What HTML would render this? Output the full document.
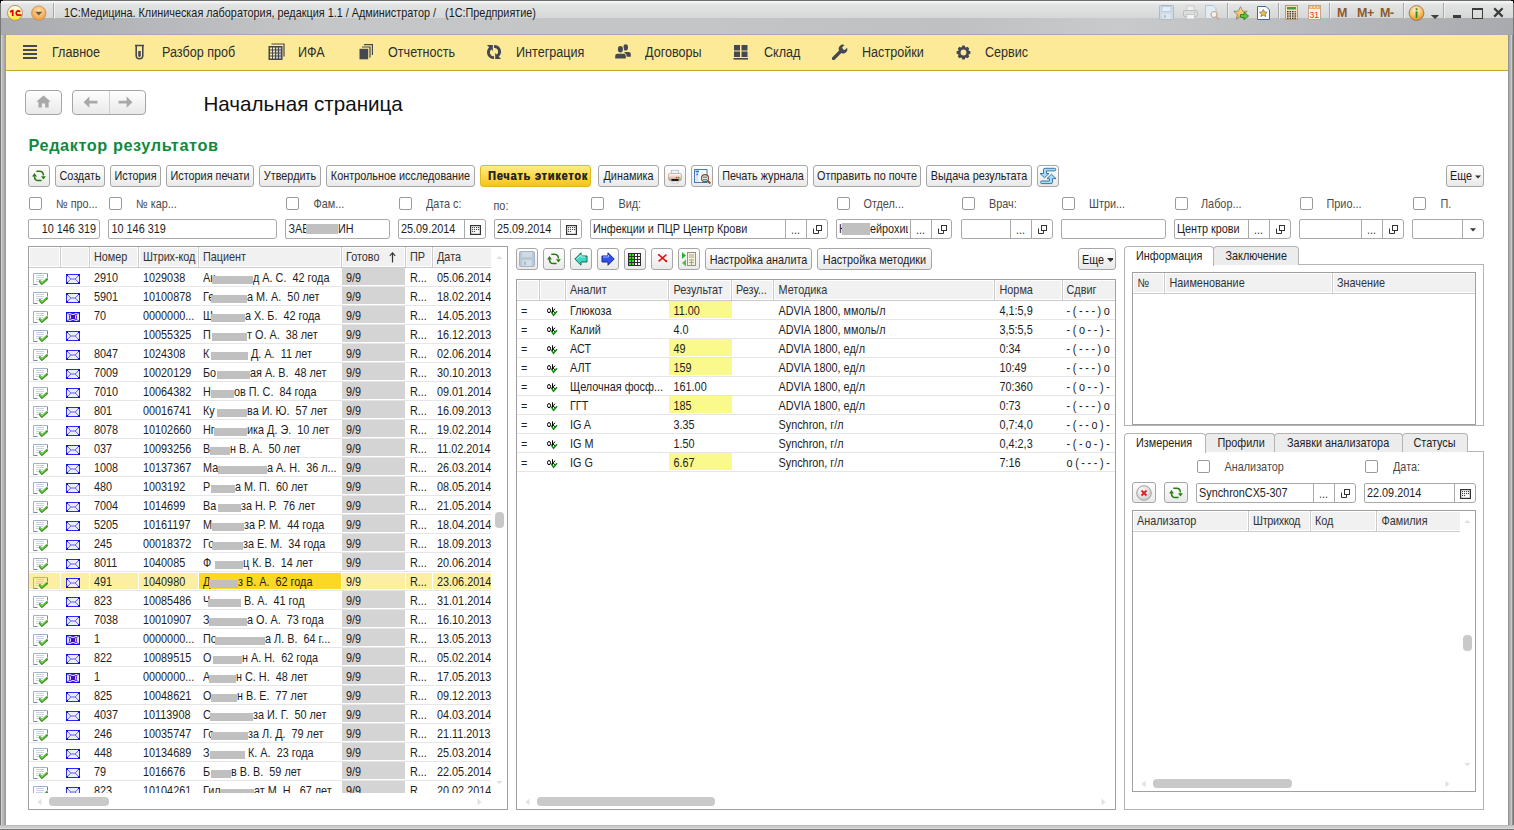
<!DOCTYPE html><html><head><meta charset="utf-8"><style>
*{margin:0;padding:0;box-sizing:border-box}
html,body{width:1514px;height:830px;overflow:hidden;background:#fff}
body{position:relative;font-family:"Liberation Sans",sans-serif;font-size:11px;color:#1e1e1e}
.b{position:absolute}
.t{position:absolute;white-space:pre}
.btn{position:absolute;border:1px solid #a6a6a6;border-radius:3px;background:linear-gradient(#ffffff,#f4f4f4 50%,#e9e9e9);}
.inp{position:absolute;border:1px solid #a9a9a9;border-radius:2px 3px 3px 2px;background:#fff}
.cb{position:absolute;width:13px;height:13px;border:1px solid #9a9a9a;border-radius:2px;background:#fff}
.vl{position:absolute;width:1px;background:#a9a9a9}
</style></head><body><div class="b" style="left:0px;top:0px;width:1514px;height:830px;background:#a7a9ac"></div><div class="b" style="left:0px;top:0px;width:1514px;height:35px;background:linear-gradient(90deg,#a9abae 0px,#b2b4b7 110px,#c5c6c8 320px,#c4c5c6 700px,#bfc0c2 950px,#c9cacb 1120px,#b9babd 1320px,#a8aaad 1514px)"></div><div class="b" style="left:0px;top:0px;width:1514px;height:18px;background:linear-gradient(#6e6e6e 0px,#6e6e6e 1px,#f6f6f6 1px,#f2f2f2 3px,#e3e4e4 4px,#d6d7d7 18px)"></div><div class="b" style="left:0px;top:34px;width:1514px;height:1px;background:#a6a8ac"></div><div class="b" style="left:0px;top:35px;width:6px;height:795px;background:linear-gradient(90deg,#777 0px,#777 1px,#d0d0d0 1px,#d0d0d0 2px,#bebebe 2px,#b8b8b8 3px,#b2b2b2 4px,#aeaeae 4px,#9c9e9e 5px,#9c9e9e 6px)"></div><div class="b" style="left:1508px;top:35px;width:6px;height:795px;background:linear-gradient(90deg,#939394 0px,#939394 1px,#ababad 1px,#ababad 2px,#b5b6b8 2px,#b5b6b8 3px,#c9c9c9 3px,#c9c9c9 4px,#909090 4px,#909090 5px,#777 5px)"></div><div class="b" style="left:0px;top:825px;width:1514px;height:5px;background:linear-gradient(#bbbbbb 0px,#bbbbbb 1px,#cdcdcd 1px,#cacaca 3px,#dcdcdc 3px,#dcdcdc 4px,#777 4px)"></div><div class="b" style="left:0px;top:1px;width:1px;height:34px;background:#777"></div><div class="b" style="left:1513px;top:1px;width:1px;height:34px;background:#777"></div><div class="b" style="left:0px;top:0px;width:3px;height:1px;background:#000"></div><div class="b" style="left:0px;top:0px;width:1px;height:3px;background:#000"></div><div class="b" style="left:1511px;top:0px;width:3px;height:1px;background:#000"></div><div class="b" style="left:1513px;top:0px;width:1px;height:3px;background:#000"></div><div class="b" style="left:6px;top:71px;width:1502px;height:754px;background:#fff"></div><div class="b" style="left:6px;top:35px;width:1502px;height:35px;background:#fcea99"></div><div class="b" style="left:6px;top:70px;width:1502px;height:1px;background:#c6a72a"></div><svg class="b" style="left:5px;top:4px;" width="20" height="18" viewBox="0 0 20 18"><defs><linearGradient id="lg1" x1="0" y1="0" x2="0" y2="1"><stop offset="0" stop-color="#fffbe8"/><stop offset="0.5" stop-color="#fff6a0"/><stop offset="1" stop-color="#ffe418"/></linearGradient></defs><circle cx="10" cy="8.9" r="7.5" fill="url(#lg1)" stroke="#a88a78" stroke-width="0.9"/><path d="M4.6 7.3 L7 5.8 H8.6 V11.9 H6.9 V7.9 L5.2 8.7 Z" fill="#e00000"/><path d="M14.6 7.2 A2.2 2.2 0 1 0 12.2 10.9" fill="none" stroke="#e00000" stroke-width="1.7"/><rect x="11.6" y="10.2" width="4.9" height="1.7" fill="#e00000"/><circle cx="14.6" cy="7.4" r="0.9" fill="#e00000"/></svg><svg class="b" style="left:30px;top:5px;" width="18" height="17" viewBox="0 0 18 17"><defs><radialGradient id="rg1" cx="0.5" cy="0.35" r="0.6"><stop offset="0" stop-color="#ffe2b0"/><stop offset="1" stop-color="#f0a040"/></radialGradient></defs><circle cx="8.8" cy="8.1" r="7.2" fill="url(#rg1)" stroke="#c88a50" stroke-width="0.8"/><path d="M5.3 6.8 L12.3 6.8 L8.8 10.6 Z" fill="#6a5a40"/></svg><div class="b" style="left:53px;top:3px;width:1px;height:16px;background:#a8a8a8;box-shadow:1px 0 0 rgba(255,255,255,0.5)"></div><div class="t" style="left:64px;top:5.64px;font-size:10.85px;line-height:14px;color:#1a1a1a;transform:scaleY(1.1);transform-origin:0 10.76px;">1С:Медицина. Клиническая лаборатория, редакция 1.1 / Администратор /&nbsp;&nbsp; (1С:Предприятие)</div><svg class="b" style="left:1159px;top:5px;" width="15" height="15" viewBox="0 0 15 15"><rect x="0.5" y="0.5" width="14" height="14" rx="1" fill="#cfdbe6" stroke="#a9bccd"/><rect x="3" y="1.5" width="9" height="5" fill="#e6eef5" stroke="#b8c8d6" stroke-width="0.8"/><rect x="3.5" y="9" width="8" height="5" fill="#dfe6ec"/><rect x="5" y="10" width="2" height="3" fill="#b5c4d2"/></svg><svg class="b" style="left:1183px;top:5px;" width="15" height="15" viewBox="0 0 15 15"><rect x="4" y="1" width="7" height="5" fill="#f0f0f0" stroke="#c4c4c4" stroke-width="0.8"/><rect x="0.5" y="5.5" width="14" height="6" rx="1.5" fill="#dcdcdc" stroke="#bdbdbd"/><rect x="3.5" y="9.5" width="8" height="4.5" fill="#f2f2f2" stroke="#c4c4c4" stroke-width="0.8"/><rect x="11" y="7" width="1.5" height="1" fill="#9fd09f"/></svg><svg class="b" style="left:1205px;top:5px;" width="15" height="15" viewBox="0 0 15 15"><path d="M0.5 0.5 H8 L11 3.5 V13.5 H0.5 Z" fill="#e4ecf3" stroke="#b4c4d4" stroke-width="1"/><circle cx="9" cy="9.5" r="3" fill="#eef2f5" stroke="#c8a890" stroke-width="1.2"/><path d="M11 11.5 L14 14.5" stroke="#c8a890" stroke-width="1.6"/></svg><div class="b" style="left:1227px;top:3px;width:1px;height:16px;background:#a8a8a8;box-shadow:1px 0 0 rgba(255,255,255,0.5)"></div><svg class="b" style="left:1233px;top:6px;" width="17" height="15" viewBox="0 0 17 15"><defs><linearGradient id="st1" x1="0" y1="0" x2="0" y2="1"><stop offset="0" stop-color="#ffe9a8"/><stop offset="1" stop-color="#e8a830"/></linearGradient></defs><path d="M7.5 0.7 L9.5 5 L14.2 5.4 L10.6 8.5 L11.7 13.1 L7.5 10.6 L3.3 13.1 L4.4 8.5 L0.8 5.4 L5.5 5 Z" fill="url(#st1)" stroke="#8a7a60" stroke-width="0.8"/><path d="M7.5 8.5 H11 V6.2 L15.6 10 L11 13.8 V11.5 H7.5 Z" fill="#58c040" stroke="#2a7a20" stroke-width="0.8"/></svg><svg class="b" style="left:1257px;top:6px;" width="14" height="14" viewBox="0 0 14 14"><path d="M0.5 0.5 H9 L12.5 4 V13.5 H0.5 Z" fill="#fff" stroke="#3a6aa8" stroke-width="1"/><path d="M6.3 3.5 L7.5 6 L10.2 6.2 L8.1 8 L8.8 10.6 L6.3 9.2 L3.8 10.6 L4.5 8 L2.4 6.2 L5.1 6 Z" fill="#f0c050" stroke="#6a5a40" stroke-width="0.6"/></svg><div class="b" style="left:1278px;top:3px;width:1px;height:16px;background:#a8a8a8;box-shadow:1px 0 0 rgba(255,255,255,0.5)"></div><svg class="b" style="left:1285px;top:5px;" width="13" height="15" viewBox="0 0 13 15"><rect x="0.5" y="0.5" width="12" height="14" fill="#f6e2c0" stroke="#b89a70"/><rect x="2" y="2" width="9" height="2.5" fill="#40a040"/><rect x="2.0" y="6.0" width="1.6" height="1.3" fill="#303030"/><rect x="4.5" y="6.0" width="1.6" height="1.3" fill="#303030"/><rect x="7.0" y="6.0" width="1.6" height="1.3" fill="#303030"/><rect x="9.5" y="6.0" width="1.6" height="1.3" fill="#d03020"/><rect x="2.0" y="8.2" width="1.6" height="1.3" fill="#303030"/><rect x="4.5" y="8.2" width="1.6" height="1.3" fill="#303030"/><rect x="7.0" y="8.2" width="1.6" height="1.3" fill="#303030"/><rect x="9.5" y="8.2" width="1.6" height="1.3" fill="#303030"/><rect x="2.0" y="10.4" width="1.6" height="1.3" fill="#303030"/><rect x="4.5" y="10.4" width="1.6" height="1.3" fill="#303030"/><rect x="7.0" y="10.4" width="1.6" height="1.3" fill="#303030"/><rect x="9.5" y="10.4" width="1.6" height="1.3" fill="#303030"/><rect x="2.0" y="12.600000000000001" width="1.6" height="1.3" fill="#303030"/><rect x="4.5" y="12.600000000000001" width="1.6" height="1.3" fill="#303030"/><rect x="7.0" y="12.600000000000001" width="1.6" height="1.3" fill="#303030"/><rect x="9.5" y="12.600000000000001" width="1.6" height="1.3" fill="#303030"/></svg><svg class="b" style="left:1308px;top:5px;" width="13" height="15" viewBox="0 0 13 15"><rect x="0.5" y="0.5" width="12" height="14" fill="#fbf3e6" stroke="#c0a890"/><rect x="1" y="1" width="11" height="3" fill="#f3b35a"/><rect x="2.5" y="1.5" width="1.2" height="1.2" fill="#fff"/><rect x="5.9" y="1.5" width="1.2" height="1.2" fill="#fff"/><rect x="9.3" y="1.5" width="1.2" height="1.2" fill="#fff"/><text x="1.6" y="13" font-family="Liberation Sans" font-size="8.5" fill="#e03010">31</text></svg><div class="b" style="left:1329px;top:3px;width:1px;height:16px;background:#a8a8a8;box-shadow:1px 0 0 rgba(255,255,255,0.5)"></div><div class="t" style="left:1337px;top:5.47px;font-size:12.5px;line-height:16px;color:#8b5a2b;font-weight:700;">M</div><div class="t" style="left:1357px;top:5.47px;font-size:12.5px;line-height:16px;color:#8b5a2b;font-weight:700;letter-spacing:-0.5px">M+</div><div class="t" style="left:1380px;top:5.47px;font-size:12.5px;line-height:16px;color:#8b5a2b;font-weight:700;letter-spacing:-0.5px">M-</div><div class="b" style="left:1403px;top:3px;width:1px;height:16px;background:#a8a8a8;box-shadow:1px 0 0 rgba(255,255,255,0.5)"></div><svg class="b" style="left:1408px;top:5px;" width="17" height="16" viewBox="0 0 17 16"><defs><radialGradient id="rg2" cx="0.45" cy="0.3" r="0.7"><stop offset="0" stop-color="#fff4d0"/><stop offset="0.6" stop-color="#f8c060"/><stop offset="1" stop-color="#e09020"/></radialGradient></defs><circle cx="8.5" cy="8" r="7.4" fill="url(#rg2)" stroke="#8a7050" stroke-width="0.8"/><rect x="7.6" y="6.3" width="1.9" height="6.5" fill="#2a8a2a"/><rect x="7.6" y="3.3" width="1.9" height="1.9" fill="#2a8a2a"/></svg><svg class="b" style="left:1430px;top:14px;" width="10" height="6" viewBox="0 0 10 6"><path d="M0.8 1 H9.2 L5 5 Z" fill="#404040"/></svg><div class="b" style="left:1443px;top:3px;width:1px;height:16px;background:#a8a8a8;box-shadow:1px 0 0 rgba(255,255,255,0.5)"></div><div class="b" style="left:1453px;top:15px;width:8px;height:3px;background:#3c3c3c"></div><div class="b" style="left:1472px;top:8px;width:11px;height:11px;border:1.5px solid #3c3c3c;border-top-width:2.5px"></div><svg class="b" style="left:1493px;top:7px;" width="11" height="11" viewBox="0 0 11 11"><path d="M1.2 1.2 L9.6 9.6 M9.6 1.2 L1.2 9.6" stroke="#3c3c3c" stroke-width="2.2"/></svg><div class="b" style="left:23px;top:45px;width:14px;height:2px;background:#454850"></div><div class="b" style="left:23px;top:49px;width:14px;height:2px;background:#454850"></div><div class="b" style="left:23px;top:53px;width:14px;height:2px;background:#454850"></div><div class="b" style="left:23px;top:57px;width:14px;height:2px;background:#454850"></div><div class="t" style="left:52px;top:44.63px;font-size:12.6px;line-height:16px;color:#2e2e2e;transform:scaleY(1.1);transform-origin:0 12.37px;">Главное</div><svg class="b" style="left:134px;top:44px;" width="11" height="16" viewBox="0 0 11 16"><path d="M1 1.5 H10 M2.2 1.5 V11.5 A3.3 3.3 0 0 0 8.8 11.5 V1.5" fill="none" stroke="#454850" stroke-width="1.6"/><path d="M4.2 7 H6.8 V12 L5.5 13.2 L4.2 12 Z" fill="#454850"/></svg><div class="t" style="left:162px;top:44.63px;font-size:12.6px;line-height:16px;color:#2e2e2e;transform:scaleY(1.1);transform-origin:0 12.37px;">Разбор проб</div><svg class="b" style="left:268px;top:43px;" width="17" height="17" viewBox="0 0 17 17"><path d="M3.5 1 H16 V13.5" fill="none" stroke="#454850" stroke-width="1.2"/><rect x="0.5" y="3" width="14" height="14" fill="#454850"/><rect x="2" y="4.5" width="2" height="2" fill="#f8f0a0"/><rect x="5" y="4.5" width="2" height="2" fill="#f8f0a0"/><rect x="8" y="4.5" width="2" height="2" fill="#c8c8cc"/><rect x="11" y="4.5" width="2" height="2" fill="#c8c8cc"/><rect x="2" y="7.5" width="2" height="2" fill="#f8f0a0"/><rect x="5" y="7.5" width="2" height="2" fill="#f8f0a0"/><rect x="8" y="7.5" width="2" height="2" fill="#c8c8cc"/><rect x="11" y="7.5" width="2" height="2" fill="#c8c8cc"/><rect x="2" y="10.5" width="2" height="2" fill="#f8f0a0"/><rect x="5" y="10.5" width="2" height="2" fill="#f8f0a0"/><rect x="8" y="10.5" width="2" height="2" fill="#c8c8cc"/><rect x="11" y="10.5" width="2" height="2" fill="#c8c8cc"/><rect x="2" y="13.5" width="2" height="2" fill="#f8f0a0"/><rect x="5" y="13.5" width="2" height="2" fill="#f8f0a0"/><rect x="8" y="13.5" width="2" height="2" fill="#c8c8cc"/><rect x="11" y="13.5" width="2" height="2" fill="#c8c8cc"/></svg><div class="t" style="left:298px;top:44.63px;font-size:12.6px;line-height:16px;color:#2e2e2e;transform:scaleY(1.1);transform-origin:0 12.37px;">ИФА</div><svg class="b" style="left:359px;top:44px;" width="14" height="16" viewBox="0 0 14 16"><path d="M5 0.6 H13.4 V11" fill="none" stroke="#454850" stroke-width="1.2"/><path d="M3 3 H11 V13.4" fill="none" stroke="#454850" stroke-width="1.2"/><rect x="0.5" y="4.8" width="8.7" height="10.5" fill="#454850"/></svg><div class="t" style="left:388px;top:44.63px;font-size:12.6px;line-height:16px;color:#2e2e2e;transform:scaleY(1.1);transform-origin:0 12.37px;">Отчетность</div><svg class="b" style="left:486px;top:44px;" width="16" height="16" viewBox="0 0 16 16"><g id="ra"><path d="M0.9 1.1 L6.8 1.1 L6.8 7 Z" fill="#454850"/><path d="M4.8 3.6 Q1.6 6.5 2.6 10 Q4 13.6 8 13.6" fill="none" stroke="#454850" stroke-width="2.8"/></g><use href="#ra" transform="rotate(180 8 8)"/></svg><div class="t" style="left:516px;top:44.63px;font-size:12.6px;line-height:16px;color:#2e2e2e;transform:scaleY(1.1);transform-origin:0 12.37px;">Интеграция</div><svg class="b" style="left:614px;top:43px;" width="18" height="16" viewBox="0 0 18 16"><ellipse cx="11.7" cy="4.4" rx="2.3" ry="3.1" fill="#454850"/><path d="M10 13.7 V10.2 Q10 9 12 9 H14.5 Q16.8 9 16.8 11 V13.7 Z" fill="#454850"/><ellipse cx="6.4" cy="6.3" rx="2.5" ry="3.2" fill="#454850" stroke="#fcea99" stroke-width="1.6" paint-order="stroke"/><path d="M1.2 15.6 V13 Q1.2 10.8 3.5 10.8 H9.5 Q11.8 10.8 11.8 13 V15.6 Z" fill="#454850" stroke="#fcea99" stroke-width="1.6" paint-order="stroke"/></svg><div class="t" style="left:645px;top:44.63px;font-size:12.6px;line-height:16px;color:#2e2e2e;transform:scaleY(1.1);transform-origin:0 12.37px;">Договоры</div><svg class="b" style="left:733px;top:44px;" width="16" height="16" viewBox="0 0 16 16"><rect x="1" y="1" width="6" height="5.5" fill="#454850"/><rect x="8.5" y="1" width="6" height="5.5" fill="#454850"/><rect x="1" y="7.5" width="6" height="5.5" fill="#454850"/><rect x="8.5" y="7.5" width="6" height="5.5" fill="#454850"/><rect x="0.5" y="14" width="14.5" height="1.6" fill="#454850"/></svg><div class="t" style="left:764px;top:44.63px;font-size:12.6px;line-height:16px;color:#2e2e2e;transform:scaleY(1.1);transform-origin:0 12.37px;">Склад</div><svg class="b" style="left:832px;top:44px;" width="16" height="16" viewBox="0 0 16 16"><path d="M1.5 14.5 L8.5 7.5" stroke="#454850" stroke-width="3.2" stroke-linecap="round"/><path d="M7 6.5 A4.2 4.2 0 0 1 12.5 1 L10.2 3.3 L11 5.2 L12.8 6 L15 3.7 A4.2 4.2 0 0 1 9.5 9.2 Z" fill="#454850"/></svg><div class="t" style="left:862px;top:44.63px;font-size:12.6px;line-height:16px;color:#2e2e2e;transform:scaleY(1.1);transform-origin:0 12.37px;">Настройки</div><svg class="b" style="left:956px;top:45px;" width="15" height="15" viewBox="0 0 15 15"><path d="M14.40 6.32 L14.40 8.68 L12.80 9.31 L12.53 9.96 L13.22 11.54 L11.54 13.22 L9.96 12.53 L9.31 12.80 L8.68 14.40 L6.32 14.40 L5.69 12.80 L5.04 12.53 L3.46 13.22 L1.78 11.54 L2.47 9.96 L2.20 9.31 L0.60 8.68 L0.60 6.32 L2.20 5.69 L2.47 5.04 L1.78 3.46 L3.46 1.78 L5.04 2.47 L5.69 2.20 L6.32 0.60 L8.68 0.60 L9.31 2.20 L9.96 2.47 L11.54 1.78 L13.22 3.46 L12.53 5.04 L12.80 5.69 Z" fill="#454850"/><circle cx="7.5" cy="7.5" r="2.9" fill="#fcea99"/></svg><div class="t" style="left:985px;top:44.63px;font-size:12.6px;line-height:16px;color:#2e2e2e;transform:scaleY(1.1);transform-origin:0 12.37px;">Сервис</div><div class="b" style="left:25px;top:90px;width:37px;height:25px;border:1px solid #a6a6a6;border-radius:4px;background:linear-gradient(#fefefe,#e9e9e9)"></div><svg class="b" style="left:36px;top:95px;" width="15" height="13" viewBox="0 0 15 13"><path d="M7.5 0.5 L14.8 6.8 H12.6 V12.6 H9.2 V8.6 H5.8 V12.6 H2.4 V6.8 H0.2 Z" fill="#a8a8a8"/></svg><div class="b" style="left:72px;top:90px;width:74px;height:25px;border:1px solid #a6a6a6;border-radius:4px;background:linear-gradient(#fefefe,#e9e9e9)"></div><div class="b" style="left:109px;top:91px;width:1px;height:23px;background:#cfcfcf"></div><svg class="b" style="left:83px;top:96px;" width="15" height="13" viewBox="0 0 15 13"><path d="M0.6 6.2 L6.4 0.6 V4.8 H14.4 V7.6 H6.4 V11.8 Z" fill="#a8a8a8"/></svg><svg class="b" style="left:118px;top:96px;" width="15" height="13" viewBox="0 0 15 13"><path d="M14.4 6.2 L8.6 0.6 V4.8 H0.6 V7.6 H8.6 V11.8 Z" fill="#a8a8a8"/></svg><div class="t" style="left:203.5px;top:90.66px;font-size:20.6px;line-height:26px;color:#111;">Начальная страница</div><div class="t" style="left:28.5px;top:135.35px;font-size:16.3px;line-height:20px;color:#128a3c;font-weight:700;letter-spacing:0.58px">Редактор результатов</div><div class="btn" style="left:28px;top:165px;width:22px;height:22px;"></div><svg class="b" style="left:32px;top:169px;" width="14" height="14" viewBox="0 0 14 14"><path d="M4.3 2.2 H7.6 Q11.4 2.2 11.4 6.6" fill="none" stroke="#2a7a12" stroke-width="1.5"/><path d="M9 7.2 H13.9 L11.45 10.6 Z" fill="#2a7a12"/><path d="M9.6 11.6 H6.3 Q2.5 11.6 2.5 7.2" fill="none" stroke="#2a7a12" stroke-width="1.5"/><path d="M0.05 7.4 H4.95 L2.5 4 Z" fill="#2a7a12"/></svg><div class="btn" style="left:55px;top:165px;width:50px;height:22px;"></div><div class="t" style="left:55px;top:169.24px;font-size:10.85px;line-height:14px;color:#1e1e1e;transform:scaleY(1.1);transform-origin:0 10.76px;width:50px;text-align:center;">Создать</div><div class="btn" style="left:110px;top:165px;width:51px;height:22px;"></div><div class="t" style="left:110px;top:169.24px;font-size:10.85px;line-height:14px;color:#1e1e1e;transform:scaleY(1.1);transform-origin:0 10.76px;width:51px;text-align:center;">История</div><div class="btn" style="left:166px;top:165px;width:88px;height:22px;"></div><div class="t" style="left:166px;top:169.24px;font-size:10.85px;line-height:14px;color:#1e1e1e;transform:scaleY(1.1);transform-origin:0 10.76px;width:88px;text-align:center;">История печати</div><div class="btn" style="left:259px;top:165px;width:62px;height:22px;"></div><div class="t" style="left:259px;top:169.24px;font-size:10.85px;line-height:14px;color:#1e1e1e;transform:scaleY(1.1);transform-origin:0 10.76px;width:62px;text-align:center;">Утвердить</div><div class="btn" style="left:326px;top:165px;width:149px;height:22px;"></div><div class="t" style="left:326px;top:169.24px;font-size:10.85px;line-height:14px;color:#1e1e1e;transform:scaleY(1.1);transform-origin:0 10.76px;width:149px;text-align:center;">Контрольное исследование</div><div class="b" style="left:480px;top:165px;width:111px;height:22px;border:1px solid #e5b820;border-radius:3px;background:linear-gradient(#ffeb8a,#fcd94a 50%,#f6c21c)"></div><div class="t" style="left:482.5px;top:169.24px;font-size:10.85px;line-height:14px;color:#262626;transform:scaleY(1.1);transform-origin:0 10.76px;font-weight:700;width:111px;text-align:center;letter-spacing:0.85px;text-shadow:0.35px 0 0 #262626">Печать этикеток</div><div class="btn" style="left:598px;top:165px;width:61px;height:22px;"></div><div class="t" style="left:598px;top:169.24px;font-size:10.85px;line-height:14px;color:#1e1e1e;transform:scaleY(1.1);transform-origin:0 10.76px;width:61px;text-align:center;">Динамика</div><div class="btn" style="left:664px;top:165px;width:22px;height:22px;"></div><svg class="b" style="left:667px;top:169px;" width="16" height="16" viewBox="0 0 16 16"><defs><linearGradient id="pr1" x1="0" y1="0" x2="0" y2="1"><stop offset="0" stop-color="#ffffff"/><stop offset="0.45" stop-color="#e8d8c8"/><stop offset="1" stop-color="#b89474"/></linearGradient></defs><rect x="4.5" y="1.3" width="7" height="5" fill="#eef4f8" stroke="#a8c0d0" stroke-width="0.8"/><rect x="1.5" y="4.5" width="13" height="7" rx="1.6" fill="url(#pr1)" stroke="#c0a894" stroke-width="0.8"/><rect x="4.5" y="10" width="7" height="2.2" fill="#111"/><rect x="5" y="12.2" width="6" height="1.8" fill="#fff" stroke="#bbb" stroke-width="0.6"/><circle cx="9.6" cy="8.6" r="0.8" fill="#f03020"/><circle cx="11.6" cy="8.6" r="0.8" fill="#30b030"/></svg><div class="btn" style="left:691px;top:165px;width:22px;height:22px;"></div><svg class="b" style="left:693px;top:168px;" width="18" height="18" viewBox="0 0 18 18"><rect x="1.5" y="1.5" width="12.5" height="13" fill="#f6f9fc" stroke="#4a7aa8" stroke-width="1"/><rect x="2.5" y="5" width="3" height="9" fill="#d8e6f2"/><rect x="2.5" y="2.6" width="3.6" height="1.8" fill="#3a78c0"/><rect x="3.4" y="5.6" width="1.6" height="1.6" fill="#3a78c0"/><circle cx="12" cy="10.2" r="3.5" fill="#dfeaf6" stroke="#8a5020" stroke-width="1.2"/><rect x="10" y="8.6" width="4" height="1.2" fill="#40a040"/><rect x="10" y="11" width="4" height="1.2" fill="#40a040"/><path d="M14.5 12.7 L17.3 15.5" stroke="#8a5020" stroke-width="1.8"/></svg><div class="btn" style="left:718px;top:165px;width:90px;height:22px;"></div><div class="t" style="left:718px;top:169.24px;font-size:10.85px;line-height:14px;color:#1e1e1e;transform:scaleY(1.1);transform-origin:0 10.76px;width:90px;text-align:center;">Печать журнала</div><div class="btn" style="left:813px;top:165px;width:108px;height:22px;"></div><div class="t" style="left:813px;top:169.24px;font-size:10.85px;line-height:14px;color:#1e1e1e;transform:scaleY(1.1);transform-origin:0 10.76px;width:108px;text-align:center;">Отправить по почте</div><div class="btn" style="left:926px;top:165px;width:106px;height:22px;"></div><div class="t" style="left:926px;top:169.24px;font-size:10.85px;line-height:14px;color:#1e1e1e;transform:scaleY(1.1);transform-origin:0 10.76px;width:106px;text-align:center;">Выдача результата</div><div class="btn" style="left:1037px;top:165px;width:22px;height:22px;"></div><svg class="b" style="left:1039px;top:167px;" width="18" height="18" viewBox="0 0 18 18"><path d="M15.8 1.3 H6 Q4.5 1.3 4.5 2.8 V6.5 H1 L5.5 10.8 L10 6.5 H7.5 V3.9 H15.8 Q16.8 3.9 16.8 2.6 Q16.8 1.3 15.8 1.3 Z" fill="#a9dcf6" stroke="#2d6c98" stroke-width="0.9"/><path d="M2.6 16.6 H12 Q13.5 16.6 13.5 15.1 V11.6 H17 L12.5 7.2 L8 11.6 H10.5 V14 H2.6 Q1.6 14 1.6 15.3 Q1.6 16.6 2.6 16.6 Z" fill="#a9dcf6" stroke="#2d6c98" stroke-width="0.9"/></svg><div class="btn" style="left:1446px;top:165px;width:38px;height:22px;"></div><div class="t" style="left:1450px;top:169.24px;font-size:10.85px;line-height:14px;color:#1e1e1e;transform:scaleY(1.1);transform-origin:0 10.76px;">Еще</div><svg class="b" style="left:1475px;top:175px;" width="6" height="4" viewBox="0 0 6 4"><path d="M0 0.5 H6 L3 3.5 Z" fill="#333"/></svg><div class="cb" style="left:29px;top:197px"></div><div class="t" style="left:56px;top:197.24px;font-size:10.85px;line-height:14px;color:#4a4a4a;transform:scaleY(1.1);transform-origin:0 10.76px;">№ про...</div><div class="cb" style="left:109px;top:197px"></div><div class="t" style="left:136px;top:197.24px;font-size:10.85px;line-height:14px;color:#4a4a4a;transform:scaleY(1.1);transform-origin:0 10.76px;">№ кар...</div><div class="cb" style="left:286px;top:197px"></div><div class="t" style="left:313.5px;top:197.24px;font-size:10.85px;line-height:14px;color:#4a4a4a;transform:scaleY(1.1);transform-origin:0 10.76px;">Фам...</div><div class="cb" style="left:399px;top:197px"></div><div class="t" style="left:426px;top:197.24px;font-size:10.85px;line-height:14px;color:#4a4a4a;transform:scaleY(1.1);transform-origin:0 10.76px;">Дата с:</div><div class="t" style="left:493.5px;top:198.74px;font-size:10.85px;line-height:14px;color:#4a4a4a;transform:scaleY(1.1);transform-origin:0 10.76px;">по:</div><div class="cb" style="left:591px;top:197px"></div><div class="t" style="left:618.5px;top:197.24px;font-size:10.85px;line-height:14px;color:#4a4a4a;transform:scaleY(1.1);transform-origin:0 10.76px;">Вид:</div><div class="cb" style="left:837px;top:197px"></div><div class="t" style="left:863.5px;top:197.24px;font-size:10.85px;line-height:14px;color:#4a4a4a;transform:scaleY(1.1);transform-origin:0 10.76px;">Отдел...</div><div class="cb" style="left:962px;top:197px"></div><div class="t" style="left:989px;top:197.24px;font-size:10.85px;line-height:14px;color:#4a4a4a;transform:scaleY(1.1);transform-origin:0 10.76px;">Врач:</div><div class="cb" style="left:1062px;top:197px"></div><div class="t" style="left:1089px;top:197.24px;font-size:10.85px;line-height:14px;color:#4a4a4a;transform:scaleY(1.1);transform-origin:0 10.76px;">Штри...</div><div class="cb" style="left:1175px;top:197px"></div><div class="t" style="left:1201px;top:197.24px;font-size:10.85px;line-height:14px;color:#4a4a4a;transform:scaleY(1.1);transform-origin:0 10.76px;">Лабор...</div><div class="cb" style="left:1300px;top:197px"></div><div class="t" style="left:1326.5px;top:197.24px;font-size:10.85px;line-height:14px;color:#4a4a4a;transform:scaleY(1.1);transform-origin:0 10.76px;">Прио...</div><div class="cb" style="left:1413px;top:197px"></div><div class="t" style="left:1440.5px;top:197.24px;font-size:10.85px;line-height:14px;color:#4a4a4a;transform:scaleY(1.1);transform-origin:0 10.76px;">П.</div><div class="inp" style="left:28px;top:219px;width:72px;height:20px"></div><div class="t" style="left:28px;top:222.44px;font-size:10.85px;line-height:14px;color:#1e1e1e;transform:scaleY(1.1);transform-origin:0 10.76px;width:68px;text-align:right;">10 146 319</div><div class="inp" style="left:108px;top:219px;width:169px;height:20px"></div><div class="t" style="left:111.5px;top:222.44px;font-size:10.85px;line-height:14px;color:#1e1e1e;transform:scaleY(1.1);transform-origin:0 10.76px;">10 146 319</div><div class="inp" style="left:285px;top:219px;width:105px;height:20px"></div><div class="t" style="left:288.5px;top:222.44px;font-size:10.85px;line-height:14px;color:#1e1e1e;transform:scaleY(1.1);transform-origin:0 10.76px;">ЗАБ</div><div class="b" style="left:306px;top:224px;width:32px;height:10px;background:#c0c0c0"></div><div class="t" style="left:338px;top:222.44px;font-size:10.85px;line-height:14px;color:#1e1e1e;transform:scaleY(1.1);transform-origin:0 10.76px;">ИН</div><div class="inp" style="left:398px;top:219px;width:88px;height:20px"></div><div class="vl" style="left:464px;top:220px;height:18px"></div><div class="t" style="left:401px;top:222.44px;font-size:10.85px;line-height:14px;color:#1e1e1e;transform:scaleY(1.1);transform-origin:0 10.76px;">25.09.2014</div><svg class="b" style="left:470px;top:225px;" width="11" height="10" viewBox="0 0 11 10"><rect x="0.6" y="0.6" width="9.8" height="8.8" fill="#fff" stroke="#333" stroke-width="1.2"/><rect x="2" y="2" width="1.1" height="1.1" fill="#444"/><rect x="4" y="2" width="1.1" height="1.1" fill="#444"/><rect x="6" y="2" width="1.1" height="1.1" fill="#444"/><rect x="8" y="2" width="1.1" height="1.1" fill="#444"/><rect x="2" y="4" width="1.1" height="1.1" fill="#444"/><rect x="4" y="4" width="1.1" height="1.1" fill="#444"/><rect x="6" y="4" width="1.1" height="1.1" fill="#444"/><rect x="8" y="4" width="1.1" height="1.1" fill="#444"/><rect x="2" y="6" width="1.1" height="1.1" fill="#444"/><rect x="4" y="6" width="1.1" height="1.1" fill="#444"/></svg><div class="inp" style="left:494px;top:219px;width:88px;height:20px"></div><div class="vl" style="left:560px;top:220px;height:18px"></div><div class="t" style="left:497px;top:222.44px;font-size:10.85px;line-height:14px;color:#1e1e1e;transform:scaleY(1.1);transform-origin:0 10.76px;">25.09.2014</div><svg class="b" style="left:566px;top:225px;" width="11" height="10" viewBox="0 0 11 10"><rect x="0.6" y="0.6" width="9.8" height="8.8" fill="#fff" stroke="#333" stroke-width="1.2"/><rect x="2" y="2" width="1.1" height="1.1" fill="#444"/><rect x="4" y="2" width="1.1" height="1.1" fill="#444"/><rect x="6" y="2" width="1.1" height="1.1" fill="#444"/><rect x="8" y="2" width="1.1" height="1.1" fill="#444"/><rect x="2" y="4" width="1.1" height="1.1" fill="#444"/><rect x="4" y="4" width="1.1" height="1.1" fill="#444"/><rect x="6" y="4" width="1.1" height="1.1" fill="#444"/><rect x="8" y="4" width="1.1" height="1.1" fill="#444"/><rect x="2" y="6" width="1.1" height="1.1" fill="#444"/><rect x="4" y="6" width="1.1" height="1.1" fill="#444"/></svg><div class="inp" style="left:590px;top:219px;width:238px;height:20px"></div><div class="vl" style="left:785px;top:220px;height:18px"></div><div class="vl" style="left:806px;top:220px;height:18px"></div><div class="t" style="left:593px;top:222.44px;font-size:10.85px;line-height:14px;color:#1e1e1e;transform:scaleY(1.1);transform-origin:0 10.76px;">Инфекции и ПЦР Центр Крови</div><div class="t" style="left:791px;top:223.24px;font-size:10.85px;line-height:14px;color:#333;transform:scaleY(1.1);transform-origin:0 10.76px;">...</div><svg class="b" style="left:813px;top:225px;" width="10" height="10" viewBox="0 0 10 10"><rect x="3.5" y="0.5" width="5" height="5" fill="none" stroke="#333" stroke-width="1"/><path d="M0.5 3.5 V8.5 H5.5 V5.8" fill="none" stroke="#333" stroke-width="1"/></svg><div class="inp" style="left:836px;top:219px;width:116px;height:20px"></div><div class="vl" style="left:910px;top:220px;height:18px"></div><div class="vl" style="left:931px;top:220px;height:18px"></div><div class="t" style="left:839px;top:222.44px;font-size:10.85px;line-height:14px;color:#1e1e1e;transform:scaleY(1.1);transform-origin:0 10.76px;">К</div><div class="b" style="left:842px;top:223px;width:28px;height:12px;background:#c0c0c0"></div><div class="b" style="left:869px;top:220px;width:39px;height:18px;overflow:hidden"><div class="t" style="left:1px;top:2.44px;font-size:10.85px;line-height:14px;color:#1e1e1e;transform:scaleY(1.1);transform-origin:0 10.76px;">ейрохиц</div></div><div class="t" style="left:916px;top:223.24px;font-size:10.85px;line-height:14px;color:#333;transform:scaleY(1.1);transform-origin:0 10.76px;">...</div><svg class="b" style="left:938px;top:225px;" width="10" height="10" viewBox="0 0 10 10"><rect x="3.5" y="0.5" width="5" height="5" fill="none" stroke="#333" stroke-width="1"/><path d="M0.5 3.5 V8.5 H5.5 V5.8" fill="none" stroke="#333" stroke-width="1"/></svg><div class="inp" style="left:961px;top:219px;width:92px;height:20px"></div><div class="vl" style="left:1010px;top:220px;height:18px"></div><div class="vl" style="left:1031px;top:220px;height:18px"></div><div class="t" style="left:1016px;top:223.24px;font-size:10.85px;line-height:14px;color:#333;transform:scaleY(1.1);transform-origin:0 10.76px;">...</div><svg class="b" style="left:1038px;top:225px;" width="10" height="10" viewBox="0 0 10 10"><rect x="3.5" y="0.5" width="5" height="5" fill="none" stroke="#333" stroke-width="1"/><path d="M0.5 3.5 V8.5 H5.5 V5.8" fill="none" stroke="#333" stroke-width="1"/></svg><div class="inp" style="left:1061px;top:219px;width:105px;height:20px"></div><div class="inp" style="left:1174px;top:219px;width:117px;height:20px"></div><div class="vl" style="left:1248px;top:220px;height:18px"></div><div class="vl" style="left:1269px;top:220px;height:18px"></div><div class="t" style="left:1177px;top:222.44px;font-size:10.85px;line-height:14px;color:#1e1e1e;transform:scaleY(1.1);transform-origin:0 10.76px;">Центр крови</div><div class="t" style="left:1254px;top:223.24px;font-size:10.85px;line-height:14px;color:#333;transform:scaleY(1.1);transform-origin:0 10.76px;">...</div><svg class="b" style="left:1276px;top:225px;" width="10" height="10" viewBox="0 0 10 10"><rect x="3.5" y="0.5" width="5" height="5" fill="none" stroke="#333" stroke-width="1"/><path d="M0.5 3.5 V8.5 H5.5 V5.8" fill="none" stroke="#333" stroke-width="1"/></svg><div class="inp" style="left:1299px;top:219px;width:105px;height:20px"></div><div class="vl" style="left:1361px;top:220px;height:18px"></div><div class="vl" style="left:1382px;top:220px;height:18px"></div><div class="t" style="left:1367px;top:223.24px;font-size:10.85px;line-height:14px;color:#333;transform:scaleY(1.1);transform-origin:0 10.76px;">...</div><svg class="b" style="left:1389px;top:225px;" width="10" height="10" viewBox="0 0 10 10"><rect x="3.5" y="0.5" width="5" height="5" fill="none" stroke="#333" stroke-width="1"/><path d="M0.5 3.5 V8.5 H5.5 V5.8" fill="none" stroke="#333" stroke-width="1"/></svg><div class="inp" style="left:1412px;top:219px;width:72px;height:20px"></div><div class="vl" style="left:1462px;top:220px;height:18px"></div><svg class="b" style="left:1470px;top:228px;" width="6" height="4" viewBox="0 0 6 4"><path d="M0 0.3 H6 L3 3.5 Z" fill="#333"/></svg><div class="b" style="left:28px;top:246px;width:480px;height:564px;border:1px solid #a0a0a0;background:#fff"></div><div class="b" style="left:30px;top:248px;width:29px;height:18px;background:#f1f1f1"></div><div class="b" style="left:60px;top:247px;width:1px;height:20px;background:#cacaca"></div><div class="b" style="left:62px;top:248px;width:26px;height:18px;background:#f1f1f1"></div><div class="b" style="left:89px;top:247px;width:1px;height:20px;background:#cacaca"></div><div class="b" style="left:91px;top:248px;width:46px;height:18px;background:#f1f1f1"></div><div class="b" style="left:138px;top:247px;width:1px;height:20px;background:#cacaca"></div><div class="b" style="left:140px;top:248px;width:57px;height:18px;background:#f1f1f1"></div><div class="b" style="left:198px;top:247px;width:1px;height:20px;background:#cacaca"></div><div class="b" style="left:200px;top:248px;width:140px;height:18px;background:#f1f1f1"></div><div class="b" style="left:341px;top:247px;width:1px;height:20px;background:#cacaca"></div><div class="b" style="left:343px;top:248px;width:61px;height:18px;background:#f1f1f1"></div><div class="b" style="left:405px;top:247px;width:1px;height:20px;background:#cacaca"></div><div class="b" style="left:407px;top:248px;width:24px;height:18px;background:#f1f1f1"></div><div class="b" style="left:432px;top:247px;width:1px;height:20px;background:#cacaca"></div><div class="b" style="left:434px;top:248px;width:57px;height:18px;background:#f1f1f1"></div><div class="b" style="left:29px;top:267px;width:462px;height:1px;background:#cacaca"></div><div class="t" style="left:94px;top:250.24px;font-size:10.85px;line-height:14px;color:#333;transform:scaleY(1.1);transform-origin:0 10.76px;">Номер</div><div class="t" style="left:143px;top:250.24px;font-size:10.85px;line-height:14px;color:#333;transform:scaleY(1.1);transform-origin:0 10.76px;letter-spacing:-0.1px">Штрих-код</div><div class="t" style="left:203px;top:250.24px;font-size:10.85px;line-height:14px;color:#333;transform:scaleY(1.1);transform-origin:0 10.76px;">Пациент</div><div class="t" style="left:346px;top:250.24px;font-size:10.85px;line-height:14px;color:#333;transform:scaleY(1.1);transform-origin:0 10.76px;">Готово</div><svg class="b" style="left:389px;top:252px;" width="7" height="11" viewBox="0 0 7 11"><path d="M3.5 1 V10.5" stroke="#333" stroke-width="1.2"/><path d="M0.8 3.8 L3.5 0.8 L6.2 3.8" fill="none" stroke="#333" stroke-width="1.1"/></svg><div class="t" style="left:410px;top:250.24px;font-size:10.85px;line-height:14px;color:#333;transform:scaleY(1.1);transform-origin:0 10.76px;">ПР</div><div class="t" style="left:437px;top:250.24px;font-size:10.85px;line-height:14px;color:#333;transform:scaleY(1.1);transform-origin:0 10.76px;">Дата</div><svg class="b" style="left:496px;top:255px;" width="7" height="5" viewBox="0 0 7 5"><path d="M0.5 4 L3.5 0.8 L6.5 4 Z" fill="#e0e0e0"/></svg><div class="b" style="left:29px;top:268px;width:462px;height:525px;overflow:hidden"><div class="b" style="left:0px;top:18px;width:462px;height:1px;background:#e6e6e6"></div><div class="b" style="left:313px;top:0px;width:63px;height:17px;background:#d4d4d4"></div><svg class="b" style="left:4px;top:5px;" width="15" height="12" viewBox="0 0 15 12"><path d="M0.5 11.5 V0.5 H14.5 V4.5" fill="none" stroke="#9fb4c8" stroke-width="1"/><path d="M0.5 11.5 H4.5" stroke="#708aa2" stroke-width="1"/><path d="M14.5 1 V4.5" stroke="#708aa2" stroke-width="1"/><path d="M3 2.5 H11 M3 4.5 H11 M3 6.5 H10 M3 8.5 H5" stroke="#b9c9d8" stroke-width="0.8"/><path d="M6.9 8.3 L8.9 10.7 L13.8 6.3" fill="none" stroke="#3a9a20" stroke-width="2.4" stroke-linejoin="round" stroke-linecap="round"/><path d="M7.2 8.2 L8.9 10.1 L13.4 6.1" fill="none" stroke="#86dc5c" stroke-width="0.9"/></svg><svg class="b" style="left:37px;top:6px;" width="14" height="10" viewBox="0 0 14 10"><rect x="0.5" y="0.5" width="13" height="9" fill="#ececfd" stroke="#2a2af6" stroke-width="1"/><path d="M0.8 0.8 L4.8 5 H9.2 L13.2 0.8 M0.8 9.2 L4.8 5 M9.2 5 L13.2 9.2" fill="none" stroke="#4a4af6" stroke-width="0.85"/><rect x="0" y="0" width="2" height="2" fill="#1010e0"/><rect x="12" y="0" width="2" height="2" fill="#1010e0"/><rect x="0" y="8" width="2" height="2" fill="#1010e0"/><rect x="12" y="8" width="2" height="2" fill="#1010e0"/></svg><div class="t" style="left:65px;top:2.84px;font-size:10.85px;line-height:14px;color:#1e1e1e;transform:scaleY(1.1);transform-origin:0 10.76px;">2910</div><div class="t" style="left:114px;top:2.84px;font-size:10.85px;line-height:14px;color:#1e1e1e;transform:scaleY(1.1);transform-origin:0 10.76px;">1029038</div><div class="t" style="left:174px;top:2.84px;font-size:10.85px;line-height:14px;color:#1e1e1e;transform:scaleY(1.1);transform-origin:0 10.76px;">Ак</div><div class="b" style="left:183px;top:8px;width:41px;height:8px;background:#c0c0c0"></div><div class="t" style="left:224px;top:2.84px;font-size:10.85px;line-height:14px;color:#1e1e1e;transform:scaleY(1.1);transform-origin:0 10.76px;">д А. С.  42 года</div><div class="t" style="left:317px;top:2.84px;font-size:10.85px;line-height:14px;color:#1e1e1e;transform:scaleY(1.1);transform-origin:0 10.76px;">9/9</div><div class="t" style="left:381px;top:2.84px;font-size:10.85px;line-height:14px;color:#1e1e1e;transform:scaleY(1.1);transform-origin:0 10.76px;">R...</div><div class="t" style="left:408px;top:2.84px;font-size:10.85px;line-height:14px;color:#1e1e1e;transform:scaleY(1.1);transform-origin:0 10.76px;">05.06.2014</div><div class="b" style="left:0px;top:37px;width:462px;height:1px;background:#e6e6e6"></div><div class="b" style="left:313px;top:19px;width:63px;height:17px;background:#d4d4d4"></div><svg class="b" style="left:4px;top:24px;" width="15" height="12" viewBox="0 0 15 12"><path d="M0.5 11.5 V0.5 H14.5 V4.5" fill="none" stroke="#9fb4c8" stroke-width="1"/><path d="M0.5 11.5 H4.5" stroke="#708aa2" stroke-width="1"/><path d="M14.5 1 V4.5" stroke="#708aa2" stroke-width="1"/><path d="M3 2.5 H11 M3 4.5 H11 M3 6.5 H10 M3 8.5 H5" stroke="#b9c9d8" stroke-width="0.8"/><path d="M6.9 8.3 L8.9 10.7 L13.8 6.3" fill="none" stroke="#3a9a20" stroke-width="2.4" stroke-linejoin="round" stroke-linecap="round"/><path d="M7.2 8.2 L8.9 10.1 L13.4 6.1" fill="none" stroke="#86dc5c" stroke-width="0.9"/></svg><svg class="b" style="left:37px;top:25px;" width="14" height="10" viewBox="0 0 14 10"><rect x="0.5" y="0.5" width="13" height="9" fill="#ececfd" stroke="#2a2af6" stroke-width="1"/><path d="M0.8 0.8 L4.8 5 H9.2 L13.2 0.8 M0.8 9.2 L4.8 5 M9.2 5 L13.2 9.2" fill="none" stroke="#4a4af6" stroke-width="0.85"/><rect x="0" y="0" width="2" height="2" fill="#1010e0"/><rect x="12" y="0" width="2" height="2" fill="#1010e0"/><rect x="0" y="8" width="2" height="2" fill="#1010e0"/><rect x="12" y="8" width="2" height="2" fill="#1010e0"/></svg><div class="t" style="left:65px;top:21.84px;font-size:10.85px;line-height:14px;color:#1e1e1e;transform:scaleY(1.1);transform-origin:0 10.76px;">5901</div><div class="t" style="left:114px;top:21.84px;font-size:10.85px;line-height:14px;color:#1e1e1e;transform:scaleY(1.1);transform-origin:0 10.76px;">10100878</div><div class="t" style="left:174px;top:21.84px;font-size:10.85px;line-height:14px;color:#1e1e1e;transform:scaleY(1.1);transform-origin:0 10.76px;">Ге</div><div class="b" style="left:182px;top:27px;width:36px;height:8px;background:#c0c0c0"></div><div class="t" style="left:218px;top:21.84px;font-size:10.85px;line-height:14px;color:#1e1e1e;transform:scaleY(1.1);transform-origin:0 10.76px;">а М. А.  50 лет</div><div class="t" style="left:317px;top:21.84px;font-size:10.85px;line-height:14px;color:#1e1e1e;transform:scaleY(1.1);transform-origin:0 10.76px;">9/9</div><div class="t" style="left:381px;top:21.84px;font-size:10.85px;line-height:14px;color:#1e1e1e;transform:scaleY(1.1);transform-origin:0 10.76px;">R...</div><div class="t" style="left:408px;top:21.84px;font-size:10.85px;line-height:14px;color:#1e1e1e;transform:scaleY(1.1);transform-origin:0 10.76px;">18.02.2014</div><div class="b" style="left:0px;top:56px;width:462px;height:1px;background:#e6e6e6"></div><div class="b" style="left:313px;top:38px;width:63px;height:17px;background:#d4d4d4"></div><svg class="b" style="left:4px;top:43px;" width="15" height="12" viewBox="0 0 15 12"><path d="M0.5 11.5 V0.5 H14.5 V4.5" fill="none" stroke="#9fb4c8" stroke-width="1"/><path d="M0.5 11.5 H4.5" stroke="#708aa2" stroke-width="1"/><path d="M14.5 1 V4.5" stroke="#708aa2" stroke-width="1"/><path d="M3 2.5 H11 M3 4.5 H11 M3 6.5 H10 M3 8.5 H5" stroke="#b9c9d8" stroke-width="0.8"/><path d="M6.9 8.3 L8.9 10.7 L13.8 6.3" fill="none" stroke="#3a9a20" stroke-width="2.4" stroke-linejoin="round" stroke-linecap="round"/><path d="M7.2 8.2 L8.9 10.1 L13.4 6.1" fill="none" stroke="#86dc5c" stroke-width="0.9"/></svg><svg class="b" style="left:37px;top:44px;" width="14" height="10" viewBox="0 0 14 10"><rect x="0.5" y="0.5" width="13" height="9" fill="#e8e8fb" stroke="#1010f0" stroke-width="1"/><path d="M0.5 0.5 L13.5 9.5 M13.5 0.5 L0.5 9.5" stroke="#1010f0" stroke-width="0.8"/><circle cx="7" cy="5" r="3.6" fill="#e8e8fb" stroke="#6010e0" stroke-width="1"/><rect x="5" y="3" width="4" height="4" fill="#4010c0"/></svg><div class="t" style="left:65px;top:40.84px;font-size:10.85px;line-height:14px;color:#1e1e1e;transform:scaleY(1.1);transform-origin:0 10.76px;">70</div><div class="t" style="left:114px;top:40.84px;font-size:10.85px;line-height:14px;color:#1e1e1e;transform:scaleY(1.1);transform-origin:0 10.76px;">0000000...</div><div class="t" style="left:174px;top:40.84px;font-size:10.85px;line-height:14px;color:#1e1e1e;transform:scaleY(1.1);transform-origin:0 10.76px;">Ш</div><div class="b" style="left:182px;top:46px;width:34px;height:8px;background:#c0c0c0"></div><div class="t" style="left:216px;top:40.84px;font-size:10.85px;line-height:14px;color:#1e1e1e;transform:scaleY(1.1);transform-origin:0 10.76px;">а Х. Б.  42 года</div><div class="t" style="left:317px;top:40.84px;font-size:10.85px;line-height:14px;color:#1e1e1e;transform:scaleY(1.1);transform-origin:0 10.76px;">9/9</div><div class="t" style="left:381px;top:40.84px;font-size:10.85px;line-height:14px;color:#1e1e1e;transform:scaleY(1.1);transform-origin:0 10.76px;">R...</div><div class="t" style="left:408px;top:40.84px;font-size:10.85px;line-height:14px;color:#1e1e1e;transform:scaleY(1.1);transform-origin:0 10.76px;">14.05.2013</div><div class="b" style="left:0px;top:75px;width:462px;height:1px;background:#e6e6e6"></div><div class="b" style="left:313px;top:57px;width:63px;height:17px;background:#d4d4d4"></div><svg class="b" style="left:4px;top:62px;" width="15" height="12" viewBox="0 0 15 12"><path d="M0.5 11.5 V0.5 H14.5 V4.5" fill="none" stroke="#9fb4c8" stroke-width="1"/><path d="M0.5 11.5 H4.5" stroke="#708aa2" stroke-width="1"/><path d="M14.5 1 V4.5" stroke="#708aa2" stroke-width="1"/><path d="M3 2.5 H11 M3 4.5 H11 M3 6.5 H10 M3 8.5 H5" stroke="#b9c9d8" stroke-width="0.8"/><path d="M6.9 8.3 L8.9 10.7 L13.8 6.3" fill="none" stroke="#3a9a20" stroke-width="2.4" stroke-linejoin="round" stroke-linecap="round"/><path d="M7.2 8.2 L8.9 10.1 L13.4 6.1" fill="none" stroke="#86dc5c" stroke-width="0.9"/></svg><svg class="b" style="left:37px;top:63px;" width="14" height="10" viewBox="0 0 14 10"><rect x="0.5" y="0.5" width="13" height="9" fill="#ececfd" stroke="#2a2af6" stroke-width="1"/><path d="M0.8 0.8 L4.8 5 H9.2 L13.2 0.8 M0.8 9.2 L4.8 5 M9.2 5 L13.2 9.2" fill="none" stroke="#4a4af6" stroke-width="0.85"/><rect x="0" y="0" width="2" height="2" fill="#1010e0"/><rect x="12" y="0" width="2" height="2" fill="#1010e0"/><rect x="0" y="8" width="2" height="2" fill="#1010e0"/><rect x="12" y="8" width="2" height="2" fill="#1010e0"/></svg><div class="t" style="left:65px;top:59.84px;font-size:10.85px;line-height:14px;color:#1e1e1e;transform:scaleY(1.1);transform-origin:0 10.76px;"></div><div class="t" style="left:114px;top:59.84px;font-size:10.85px;line-height:14px;color:#1e1e1e;transform:scaleY(1.1);transform-origin:0 10.76px;">10055325</div><div class="t" style="left:174px;top:59.84px;font-size:10.85px;line-height:14px;color:#1e1e1e;transform:scaleY(1.1);transform-origin:0 10.76px;">П</div><div class="b" style="left:183px;top:65px;width:35px;height:8px;background:#c0c0c0"></div><div class="t" style="left:218px;top:59.84px;font-size:10.85px;line-height:14px;color:#1e1e1e;transform:scaleY(1.1);transform-origin:0 10.76px;">т О. А.  38 лет</div><div class="t" style="left:317px;top:59.84px;font-size:10.85px;line-height:14px;color:#1e1e1e;transform:scaleY(1.1);transform-origin:0 10.76px;">9/9</div><div class="t" style="left:381px;top:59.84px;font-size:10.85px;line-height:14px;color:#1e1e1e;transform:scaleY(1.1);transform-origin:0 10.76px;">R...</div><div class="t" style="left:408px;top:59.84px;font-size:10.85px;line-height:14px;color:#1e1e1e;transform:scaleY(1.1);transform-origin:0 10.76px;">16.12.2013</div><div class="b" style="left:0px;top:94px;width:462px;height:1px;background:#e6e6e6"></div><div class="b" style="left:313px;top:76px;width:63px;height:17px;background:#d4d4d4"></div><svg class="b" style="left:4px;top:81px;" width="15" height="12" viewBox="0 0 15 12"><path d="M0.5 11.5 V0.5 H14.5 V4.5" fill="none" stroke="#9fb4c8" stroke-width="1"/><path d="M0.5 11.5 H4.5" stroke="#708aa2" stroke-width="1"/><path d="M14.5 1 V4.5" stroke="#708aa2" stroke-width="1"/><path d="M3 2.5 H11 M3 4.5 H11 M3 6.5 H10 M3 8.5 H5" stroke="#b9c9d8" stroke-width="0.8"/><path d="M6.9 8.3 L8.9 10.7 L13.8 6.3" fill="none" stroke="#3a9a20" stroke-width="2.4" stroke-linejoin="round" stroke-linecap="round"/><path d="M7.2 8.2 L8.9 10.1 L13.4 6.1" fill="none" stroke="#86dc5c" stroke-width="0.9"/></svg><svg class="b" style="left:37px;top:82px;" width="14" height="10" viewBox="0 0 14 10"><rect x="0.5" y="0.5" width="13" height="9" fill="#ececfd" stroke="#2a2af6" stroke-width="1"/><path d="M0.8 0.8 L4.8 5 H9.2 L13.2 0.8 M0.8 9.2 L4.8 5 M9.2 5 L13.2 9.2" fill="none" stroke="#4a4af6" stroke-width="0.85"/><rect x="0" y="0" width="2" height="2" fill="#1010e0"/><rect x="12" y="0" width="2" height="2" fill="#1010e0"/><rect x="0" y="8" width="2" height="2" fill="#1010e0"/><rect x="12" y="8" width="2" height="2" fill="#1010e0"/></svg><div class="t" style="left:65px;top:78.84px;font-size:10.85px;line-height:14px;color:#1e1e1e;transform:scaleY(1.1);transform-origin:0 10.76px;">8047</div><div class="t" style="left:114px;top:78.84px;font-size:10.85px;line-height:14px;color:#1e1e1e;transform:scaleY(1.1);transform-origin:0 10.76px;">1024308</div><div class="t" style="left:174px;top:78.84px;font-size:10.85px;line-height:14px;color:#1e1e1e;transform:scaleY(1.1);transform-origin:0 10.76px;">К</div><div class="b" style="left:182px;top:84px;width:37px;height:8px;background:#c0c0c0"></div><div class="t" style="left:219px;top:78.84px;font-size:10.85px;line-height:14px;color:#1e1e1e;transform:scaleY(1.1);transform-origin:0 10.76px;"> Д. А.  11 лет</div><div class="t" style="left:317px;top:78.84px;font-size:10.85px;line-height:14px;color:#1e1e1e;transform:scaleY(1.1);transform-origin:0 10.76px;">9/9</div><div class="t" style="left:381px;top:78.84px;font-size:10.85px;line-height:14px;color:#1e1e1e;transform:scaleY(1.1);transform-origin:0 10.76px;">R...</div><div class="t" style="left:408px;top:78.84px;font-size:10.85px;line-height:14px;color:#1e1e1e;transform:scaleY(1.1);transform-origin:0 10.76px;">02.06.2014</div><div class="b" style="left:0px;top:113px;width:462px;height:1px;background:#e6e6e6"></div><div class="b" style="left:313px;top:95px;width:63px;height:17px;background:#d4d4d4"></div><svg class="b" style="left:4px;top:100px;" width="15" height="12" viewBox="0 0 15 12"><path d="M0.5 11.5 V0.5 H14.5 V4.5" fill="none" stroke="#9fb4c8" stroke-width="1"/><path d="M0.5 11.5 H4.5" stroke="#708aa2" stroke-width="1"/><path d="M14.5 1 V4.5" stroke="#708aa2" stroke-width="1"/><path d="M3 2.5 H11 M3 4.5 H11 M3 6.5 H10 M3 8.5 H5" stroke="#b9c9d8" stroke-width="0.8"/><path d="M6.9 8.3 L8.9 10.7 L13.8 6.3" fill="none" stroke="#3a9a20" stroke-width="2.4" stroke-linejoin="round" stroke-linecap="round"/><path d="M7.2 8.2 L8.9 10.1 L13.4 6.1" fill="none" stroke="#86dc5c" stroke-width="0.9"/></svg><svg class="b" style="left:37px;top:101px;" width="14" height="10" viewBox="0 0 14 10"><rect x="0.5" y="0.5" width="13" height="9" fill="#ececfd" stroke="#2a2af6" stroke-width="1"/><path d="M0.8 0.8 L4.8 5 H9.2 L13.2 0.8 M0.8 9.2 L4.8 5 M9.2 5 L13.2 9.2" fill="none" stroke="#4a4af6" stroke-width="0.85"/><rect x="0" y="0" width="2" height="2" fill="#1010e0"/><rect x="12" y="0" width="2" height="2" fill="#1010e0"/><rect x="0" y="8" width="2" height="2" fill="#1010e0"/><rect x="12" y="8" width="2" height="2" fill="#1010e0"/></svg><div class="t" style="left:65px;top:97.84px;font-size:10.85px;line-height:14px;color:#1e1e1e;transform:scaleY(1.1);transform-origin:0 10.76px;">7009</div><div class="t" style="left:114px;top:97.84px;font-size:10.85px;line-height:14px;color:#1e1e1e;transform:scaleY(1.1);transform-origin:0 10.76px;">10020129</div><div class="t" style="left:174px;top:97.84px;font-size:10.85px;line-height:14px;color:#1e1e1e;transform:scaleY(1.1);transform-origin:0 10.76px;">Бо</div><div class="b" style="left:188px;top:103px;width:33px;height:8px;background:#c0c0c0"></div><div class="t" style="left:221px;top:97.84px;font-size:10.85px;line-height:14px;color:#1e1e1e;transform:scaleY(1.1);transform-origin:0 10.76px;">ая А. В.  48 лет</div><div class="t" style="left:317px;top:97.84px;font-size:10.85px;line-height:14px;color:#1e1e1e;transform:scaleY(1.1);transform-origin:0 10.76px;">9/9</div><div class="t" style="left:381px;top:97.84px;font-size:10.85px;line-height:14px;color:#1e1e1e;transform:scaleY(1.1);transform-origin:0 10.76px;">R...</div><div class="t" style="left:408px;top:97.84px;font-size:10.85px;line-height:14px;color:#1e1e1e;transform:scaleY(1.1);transform-origin:0 10.76px;">30.10.2013</div><div class="b" style="left:0px;top:132px;width:462px;height:1px;background:#e6e6e6"></div><div class="b" style="left:313px;top:114px;width:63px;height:17px;background:#d4d4d4"></div><svg class="b" style="left:4px;top:119px;" width="15" height="12" viewBox="0 0 15 12"><path d="M0.5 11.5 V0.5 H14.5 V4.5" fill="none" stroke="#9fb4c8" stroke-width="1"/><path d="M0.5 11.5 H4.5" stroke="#708aa2" stroke-width="1"/><path d="M14.5 1 V4.5" stroke="#708aa2" stroke-width="1"/><path d="M3 2.5 H11 M3 4.5 H11 M3 6.5 H10 M3 8.5 H5" stroke="#b9c9d8" stroke-width="0.8"/><path d="M6.9 8.3 L8.9 10.7 L13.8 6.3" fill="none" stroke="#3a9a20" stroke-width="2.4" stroke-linejoin="round" stroke-linecap="round"/><path d="M7.2 8.2 L8.9 10.1 L13.4 6.1" fill="none" stroke="#86dc5c" stroke-width="0.9"/></svg><svg class="b" style="left:37px;top:120px;" width="14" height="10" viewBox="0 0 14 10"><rect x="0.5" y="0.5" width="13" height="9" fill="#ececfd" stroke="#2a2af6" stroke-width="1"/><path d="M0.8 0.8 L4.8 5 H9.2 L13.2 0.8 M0.8 9.2 L4.8 5 M9.2 5 L13.2 9.2" fill="none" stroke="#4a4af6" stroke-width="0.85"/><rect x="0" y="0" width="2" height="2" fill="#1010e0"/><rect x="12" y="0" width="2" height="2" fill="#1010e0"/><rect x="0" y="8" width="2" height="2" fill="#1010e0"/><rect x="12" y="8" width="2" height="2" fill="#1010e0"/></svg><div class="t" style="left:65px;top:116.84px;font-size:10.85px;line-height:14px;color:#1e1e1e;transform:scaleY(1.1);transform-origin:0 10.76px;">7010</div><div class="t" style="left:114px;top:116.84px;font-size:10.85px;line-height:14px;color:#1e1e1e;transform:scaleY(1.1);transform-origin:0 10.76px;">10064382</div><div class="t" style="left:174px;top:116.84px;font-size:10.85px;line-height:14px;color:#1e1e1e;transform:scaleY(1.1);transform-origin:0 10.76px;">Н</div><div class="b" style="left:182px;top:122px;width:23px;height:8px;background:#c0c0c0"></div><div class="t" style="left:205px;top:116.84px;font-size:10.85px;line-height:14px;color:#1e1e1e;transform:scaleY(1.1);transform-origin:0 10.76px;">ов П. С.  84 года</div><div class="t" style="left:317px;top:116.84px;font-size:10.85px;line-height:14px;color:#1e1e1e;transform:scaleY(1.1);transform-origin:0 10.76px;">9/9</div><div class="t" style="left:381px;top:116.84px;font-size:10.85px;line-height:14px;color:#1e1e1e;transform:scaleY(1.1);transform-origin:0 10.76px;">R...</div><div class="t" style="left:408px;top:116.84px;font-size:10.85px;line-height:14px;color:#1e1e1e;transform:scaleY(1.1);transform-origin:0 10.76px;">09.01.2014</div><div class="b" style="left:0px;top:151px;width:462px;height:1px;background:#e6e6e6"></div><div class="b" style="left:313px;top:133px;width:63px;height:17px;background:#d4d4d4"></div><svg class="b" style="left:4px;top:138px;" width="15" height="12" viewBox="0 0 15 12"><path d="M0.5 11.5 V0.5 H14.5 V4.5" fill="none" stroke="#9fb4c8" stroke-width="1"/><path d="M0.5 11.5 H4.5" stroke="#708aa2" stroke-width="1"/><path d="M14.5 1 V4.5" stroke="#708aa2" stroke-width="1"/><path d="M3 2.5 H11 M3 4.5 H11 M3 6.5 H10 M3 8.5 H5" stroke="#b9c9d8" stroke-width="0.8"/><path d="M6.9 8.3 L8.9 10.7 L13.8 6.3" fill="none" stroke="#3a9a20" stroke-width="2.4" stroke-linejoin="round" stroke-linecap="round"/><path d="M7.2 8.2 L8.9 10.1 L13.4 6.1" fill="none" stroke="#86dc5c" stroke-width="0.9"/></svg><svg class="b" style="left:37px;top:139px;" width="14" height="10" viewBox="0 0 14 10"><rect x="0.5" y="0.5" width="13" height="9" fill="#ececfd" stroke="#2a2af6" stroke-width="1"/><path d="M0.8 0.8 L4.8 5 H9.2 L13.2 0.8 M0.8 9.2 L4.8 5 M9.2 5 L13.2 9.2" fill="none" stroke="#4a4af6" stroke-width="0.85"/><rect x="0" y="0" width="2" height="2" fill="#1010e0"/><rect x="12" y="0" width="2" height="2" fill="#1010e0"/><rect x="0" y="8" width="2" height="2" fill="#1010e0"/><rect x="12" y="8" width="2" height="2" fill="#1010e0"/></svg><div class="t" style="left:65px;top:135.84px;font-size:10.85px;line-height:14px;color:#1e1e1e;transform:scaleY(1.1);transform-origin:0 10.76px;">801</div><div class="t" style="left:114px;top:135.84px;font-size:10.85px;line-height:14px;color:#1e1e1e;transform:scaleY(1.1);transform-origin:0 10.76px;">00016741</div><div class="t" style="left:174px;top:135.84px;font-size:10.85px;line-height:14px;color:#1e1e1e;transform:scaleY(1.1);transform-origin:0 10.76px;">Ку</div><div class="b" style="left:188px;top:141px;width:30px;height:8px;background:#c0c0c0"></div><div class="t" style="left:218px;top:135.84px;font-size:10.85px;line-height:14px;color:#1e1e1e;transform:scaleY(1.1);transform-origin:0 10.76px;">ва И. Ю.  57 лет</div><div class="t" style="left:317px;top:135.84px;font-size:10.85px;line-height:14px;color:#1e1e1e;transform:scaleY(1.1);transform-origin:0 10.76px;">9/9</div><div class="t" style="left:381px;top:135.84px;font-size:10.85px;line-height:14px;color:#1e1e1e;transform:scaleY(1.1);transform-origin:0 10.76px;">R...</div><div class="t" style="left:408px;top:135.84px;font-size:10.85px;line-height:14px;color:#1e1e1e;transform:scaleY(1.1);transform-origin:0 10.76px;">16.09.2013</div><div class="b" style="left:0px;top:170px;width:462px;height:1px;background:#e6e6e6"></div><div class="b" style="left:313px;top:152px;width:63px;height:17px;background:#d4d4d4"></div><svg class="b" style="left:4px;top:157px;" width="15" height="12" viewBox="0 0 15 12"><path d="M0.5 11.5 V0.5 H14.5 V4.5" fill="none" stroke="#9fb4c8" stroke-width="1"/><path d="M0.5 11.5 H4.5" stroke="#708aa2" stroke-width="1"/><path d="M14.5 1 V4.5" stroke="#708aa2" stroke-width="1"/><path d="M3 2.5 H11 M3 4.5 H11 M3 6.5 H10 M3 8.5 H5" stroke="#b9c9d8" stroke-width="0.8"/><path d="M6.9 8.3 L8.9 10.7 L13.8 6.3" fill="none" stroke="#3a9a20" stroke-width="2.4" stroke-linejoin="round" stroke-linecap="round"/><path d="M7.2 8.2 L8.9 10.1 L13.4 6.1" fill="none" stroke="#86dc5c" stroke-width="0.9"/></svg><svg class="b" style="left:37px;top:158px;" width="14" height="10" viewBox="0 0 14 10"><rect x="0.5" y="0.5" width="13" height="9" fill="#ececfd" stroke="#2a2af6" stroke-width="1"/><path d="M0.8 0.8 L4.8 5 H9.2 L13.2 0.8 M0.8 9.2 L4.8 5 M9.2 5 L13.2 9.2" fill="none" stroke="#4a4af6" stroke-width="0.85"/><rect x="0" y="0" width="2" height="2" fill="#1010e0"/><rect x="12" y="0" width="2" height="2" fill="#1010e0"/><rect x="0" y="8" width="2" height="2" fill="#1010e0"/><rect x="12" y="8" width="2" height="2" fill="#1010e0"/></svg><div class="t" style="left:65px;top:154.84px;font-size:10.85px;line-height:14px;color:#1e1e1e;transform:scaleY(1.1);transform-origin:0 10.76px;">8078</div><div class="t" style="left:114px;top:154.84px;font-size:10.85px;line-height:14px;color:#1e1e1e;transform:scaleY(1.1);transform-origin:0 10.76px;">10102660</div><div class="t" style="left:174px;top:154.84px;font-size:10.85px;line-height:14px;color:#1e1e1e;transform:scaleY(1.1);transform-origin:0 10.76px;">Нг</div><div class="b" style="left:185px;top:160px;width:33px;height:8px;background:#c0c0c0"></div><div class="t" style="left:218px;top:154.84px;font-size:10.85px;line-height:14px;color:#1e1e1e;transform:scaleY(1.1);transform-origin:0 10.76px;">ика Д. Э.  10 лет</div><div class="t" style="left:317px;top:154.84px;font-size:10.85px;line-height:14px;color:#1e1e1e;transform:scaleY(1.1);transform-origin:0 10.76px;">9/9</div><div class="t" style="left:381px;top:154.84px;font-size:10.85px;line-height:14px;color:#1e1e1e;transform:scaleY(1.1);transform-origin:0 10.76px;">R...</div><div class="t" style="left:408px;top:154.84px;font-size:10.85px;line-height:14px;color:#1e1e1e;transform:scaleY(1.1);transform-origin:0 10.76px;">19.02.2014</div><div class="b" style="left:0px;top:189px;width:462px;height:1px;background:#e6e6e6"></div><div class="b" style="left:313px;top:171px;width:63px;height:17px;background:#d4d4d4"></div><svg class="b" style="left:4px;top:176px;" width="15" height="12" viewBox="0 0 15 12"><path d="M0.5 11.5 V0.5 H14.5 V4.5" fill="none" stroke="#9fb4c8" stroke-width="1"/><path d="M0.5 11.5 H4.5" stroke="#708aa2" stroke-width="1"/><path d="M14.5 1 V4.5" stroke="#708aa2" stroke-width="1"/><path d="M3 2.5 H11 M3 4.5 H11 M3 6.5 H10 M3 8.5 H5" stroke="#b9c9d8" stroke-width="0.8"/><path d="M6.9 8.3 L8.9 10.7 L13.8 6.3" fill="none" stroke="#3a9a20" stroke-width="2.4" stroke-linejoin="round" stroke-linecap="round"/><path d="M7.2 8.2 L8.9 10.1 L13.4 6.1" fill="none" stroke="#86dc5c" stroke-width="0.9"/></svg><svg class="b" style="left:37px;top:177px;" width="14" height="10" viewBox="0 0 14 10"><rect x="0.5" y="0.5" width="13" height="9" fill="#ececfd" stroke="#2a2af6" stroke-width="1"/><path d="M0.8 0.8 L4.8 5 H9.2 L13.2 0.8 M0.8 9.2 L4.8 5 M9.2 5 L13.2 9.2" fill="none" stroke="#4a4af6" stroke-width="0.85"/><rect x="0" y="0" width="2" height="2" fill="#1010e0"/><rect x="12" y="0" width="2" height="2" fill="#1010e0"/><rect x="0" y="8" width="2" height="2" fill="#1010e0"/><rect x="12" y="8" width="2" height="2" fill="#1010e0"/></svg><div class="t" style="left:65px;top:173.84px;font-size:10.85px;line-height:14px;color:#1e1e1e;transform:scaleY(1.1);transform-origin:0 10.76px;">037</div><div class="t" style="left:114px;top:173.84px;font-size:10.85px;line-height:14px;color:#1e1e1e;transform:scaleY(1.1);transform-origin:0 10.76px;">10093256</div><div class="t" style="left:174px;top:173.84px;font-size:10.85px;line-height:14px;color:#1e1e1e;transform:scaleY(1.1);transform-origin:0 10.76px;">В</div><div class="b" style="left:181px;top:179px;width:20px;height:8px;background:#c0c0c0"></div><div class="t" style="left:201px;top:173.84px;font-size:10.85px;line-height:14px;color:#1e1e1e;transform:scaleY(1.1);transform-origin:0 10.76px;">н В. А.  50 лет</div><div class="t" style="left:317px;top:173.84px;font-size:10.85px;line-height:14px;color:#1e1e1e;transform:scaleY(1.1);transform-origin:0 10.76px;">9/9</div><div class="t" style="left:381px;top:173.84px;font-size:10.85px;line-height:14px;color:#1e1e1e;transform:scaleY(1.1);transform-origin:0 10.76px;">R...</div><div class="t" style="left:408px;top:173.84px;font-size:10.85px;line-height:14px;color:#1e1e1e;transform:scaleY(1.1);transform-origin:0 10.76px;">11.02.2014</div><div class="b" style="left:0px;top:208px;width:462px;height:1px;background:#e6e6e6"></div><div class="b" style="left:313px;top:190px;width:63px;height:17px;background:#d4d4d4"></div><svg class="b" style="left:4px;top:195px;" width="15" height="12" viewBox="0 0 15 12"><path d="M0.5 11.5 V0.5 H14.5 V4.5" fill="none" stroke="#9fb4c8" stroke-width="1"/><path d="M0.5 11.5 H4.5" stroke="#708aa2" stroke-width="1"/><path d="M14.5 1 V4.5" stroke="#708aa2" stroke-width="1"/><path d="M3 2.5 H11 M3 4.5 H11 M3 6.5 H10 M3 8.5 H5" stroke="#b9c9d8" stroke-width="0.8"/><path d="M6.9 8.3 L8.9 10.7 L13.8 6.3" fill="none" stroke="#3a9a20" stroke-width="2.4" stroke-linejoin="round" stroke-linecap="round"/><path d="M7.2 8.2 L8.9 10.1 L13.4 6.1" fill="none" stroke="#86dc5c" stroke-width="0.9"/></svg><svg class="b" style="left:37px;top:196px;" width="14" height="10" viewBox="0 0 14 10"><rect x="0.5" y="0.5" width="13" height="9" fill="#ececfd" stroke="#2a2af6" stroke-width="1"/><path d="M0.8 0.8 L4.8 5 H9.2 L13.2 0.8 M0.8 9.2 L4.8 5 M9.2 5 L13.2 9.2" fill="none" stroke="#4a4af6" stroke-width="0.85"/><rect x="0" y="0" width="2" height="2" fill="#1010e0"/><rect x="12" y="0" width="2" height="2" fill="#1010e0"/><rect x="0" y="8" width="2" height="2" fill="#1010e0"/><rect x="12" y="8" width="2" height="2" fill="#1010e0"/></svg><div class="t" style="left:65px;top:192.84px;font-size:10.85px;line-height:14px;color:#1e1e1e;transform:scaleY(1.1);transform-origin:0 10.76px;">1008</div><div class="t" style="left:114px;top:192.84px;font-size:10.85px;line-height:14px;color:#1e1e1e;transform:scaleY(1.1);transform-origin:0 10.76px;">10137367</div><div class="t" style="left:174px;top:192.84px;font-size:10.85px;line-height:14px;color:#1e1e1e;transform:scaleY(1.1);transform-origin:0 10.76px;">Ма</div><div class="b" style="left:189px;top:198px;width:49px;height:8px;background:#c0c0c0"></div><div class="t" style="left:238px;top:192.84px;font-size:10.85px;line-height:14px;color:#1e1e1e;transform:scaleY(1.1);transform-origin:0 10.76px;">а А. Н.  36 л...</div><div class="t" style="left:317px;top:192.84px;font-size:10.85px;line-height:14px;color:#1e1e1e;transform:scaleY(1.1);transform-origin:0 10.76px;">9/9</div><div class="t" style="left:381px;top:192.84px;font-size:10.85px;line-height:14px;color:#1e1e1e;transform:scaleY(1.1);transform-origin:0 10.76px;">R...</div><div class="t" style="left:408px;top:192.84px;font-size:10.85px;line-height:14px;color:#1e1e1e;transform:scaleY(1.1);transform-origin:0 10.76px;">26.03.2014</div><div class="b" style="left:0px;top:227px;width:462px;height:1px;background:#e6e6e6"></div><div class="b" style="left:313px;top:209px;width:63px;height:17px;background:#d4d4d4"></div><svg class="b" style="left:4px;top:214px;" width="15" height="12" viewBox="0 0 15 12"><path d="M0.5 11.5 V0.5 H14.5 V4.5" fill="none" stroke="#9fb4c8" stroke-width="1"/><path d="M0.5 11.5 H4.5" stroke="#708aa2" stroke-width="1"/><path d="M14.5 1 V4.5" stroke="#708aa2" stroke-width="1"/><path d="M3 2.5 H11 M3 4.5 H11 M3 6.5 H10 M3 8.5 H5" stroke="#b9c9d8" stroke-width="0.8"/><path d="M6.9 8.3 L8.9 10.7 L13.8 6.3" fill="none" stroke="#3a9a20" stroke-width="2.4" stroke-linejoin="round" stroke-linecap="round"/><path d="M7.2 8.2 L8.9 10.1 L13.4 6.1" fill="none" stroke="#86dc5c" stroke-width="0.9"/></svg><svg class="b" style="left:37px;top:215px;" width="14" height="10" viewBox="0 0 14 10"><rect x="0.5" y="0.5" width="13" height="9" fill="#ececfd" stroke="#2a2af6" stroke-width="1"/><path d="M0.8 0.8 L4.8 5 H9.2 L13.2 0.8 M0.8 9.2 L4.8 5 M9.2 5 L13.2 9.2" fill="none" stroke="#4a4af6" stroke-width="0.85"/><rect x="0" y="0" width="2" height="2" fill="#1010e0"/><rect x="12" y="0" width="2" height="2" fill="#1010e0"/><rect x="0" y="8" width="2" height="2" fill="#1010e0"/><rect x="12" y="8" width="2" height="2" fill="#1010e0"/></svg><div class="t" style="left:65px;top:211.84px;font-size:10.85px;line-height:14px;color:#1e1e1e;transform:scaleY(1.1);transform-origin:0 10.76px;">480</div><div class="t" style="left:114px;top:211.84px;font-size:10.85px;line-height:14px;color:#1e1e1e;transform:scaleY(1.1);transform-origin:0 10.76px;">1003192</div><div class="t" style="left:174px;top:211.84px;font-size:10.85px;line-height:14px;color:#1e1e1e;transform:scaleY(1.1);transform-origin:0 10.76px;">Р</div><div class="b" style="left:182px;top:217px;width:24px;height:8px;background:#c0c0c0"></div><div class="t" style="left:206px;top:211.84px;font-size:10.85px;line-height:14px;color:#1e1e1e;transform:scaleY(1.1);transform-origin:0 10.76px;">а М. П.  60 лет</div><div class="t" style="left:317px;top:211.84px;font-size:10.85px;line-height:14px;color:#1e1e1e;transform:scaleY(1.1);transform-origin:0 10.76px;">9/9</div><div class="t" style="left:381px;top:211.84px;font-size:10.85px;line-height:14px;color:#1e1e1e;transform:scaleY(1.1);transform-origin:0 10.76px;">R...</div><div class="t" style="left:408px;top:211.84px;font-size:10.85px;line-height:14px;color:#1e1e1e;transform:scaleY(1.1);transform-origin:0 10.76px;">08.05.2014</div><div class="b" style="left:0px;top:246px;width:462px;height:1px;background:#e6e6e6"></div><div class="b" style="left:313px;top:228px;width:63px;height:17px;background:#d4d4d4"></div><svg class="b" style="left:4px;top:233px;" width="15" height="12" viewBox="0 0 15 12"><path d="M0.5 11.5 V0.5 H14.5 V4.5" fill="none" stroke="#9fb4c8" stroke-width="1"/><path d="M0.5 11.5 H4.5" stroke="#708aa2" stroke-width="1"/><path d="M14.5 1 V4.5" stroke="#708aa2" stroke-width="1"/><path d="M3 2.5 H11 M3 4.5 H11 M3 6.5 H10 M3 8.5 H5" stroke="#b9c9d8" stroke-width="0.8"/><path d="M6.9 8.3 L8.9 10.7 L13.8 6.3" fill="none" stroke="#3a9a20" stroke-width="2.4" stroke-linejoin="round" stroke-linecap="round"/><path d="M7.2 8.2 L8.9 10.1 L13.4 6.1" fill="none" stroke="#86dc5c" stroke-width="0.9"/></svg><svg class="b" style="left:37px;top:234px;" width="14" height="10" viewBox="0 0 14 10"><rect x="0.5" y="0.5" width="13" height="9" fill="#ececfd" stroke="#2a2af6" stroke-width="1"/><path d="M0.8 0.8 L4.8 5 H9.2 L13.2 0.8 M0.8 9.2 L4.8 5 M9.2 5 L13.2 9.2" fill="none" stroke="#4a4af6" stroke-width="0.85"/><rect x="0" y="0" width="2" height="2" fill="#1010e0"/><rect x="12" y="0" width="2" height="2" fill="#1010e0"/><rect x="0" y="8" width="2" height="2" fill="#1010e0"/><rect x="12" y="8" width="2" height="2" fill="#1010e0"/></svg><div class="t" style="left:65px;top:230.84px;font-size:10.85px;line-height:14px;color:#1e1e1e;transform:scaleY(1.1);transform-origin:0 10.76px;">7004</div><div class="t" style="left:114px;top:230.84px;font-size:10.85px;line-height:14px;color:#1e1e1e;transform:scaleY(1.1);transform-origin:0 10.76px;">1014699</div><div class="t" style="left:174px;top:230.84px;font-size:10.85px;line-height:14px;color:#1e1e1e;transform:scaleY(1.1);transform-origin:0 10.76px;">Ва</div><div class="b" style="left:189px;top:236px;width:23px;height:8px;background:#c0c0c0"></div><div class="t" style="left:212px;top:230.84px;font-size:10.85px;line-height:14px;color:#1e1e1e;transform:scaleY(1.1);transform-origin:0 10.76px;">за Н. Р.  76 лет</div><div class="t" style="left:317px;top:230.84px;font-size:10.85px;line-height:14px;color:#1e1e1e;transform:scaleY(1.1);transform-origin:0 10.76px;">9/9</div><div class="t" style="left:381px;top:230.84px;font-size:10.85px;line-height:14px;color:#1e1e1e;transform:scaleY(1.1);transform-origin:0 10.76px;">R...</div><div class="t" style="left:408px;top:230.84px;font-size:10.85px;line-height:14px;color:#1e1e1e;transform:scaleY(1.1);transform-origin:0 10.76px;">21.05.2014</div><div class="b" style="left:0px;top:265px;width:462px;height:1px;background:#e6e6e6"></div><div class="b" style="left:313px;top:247px;width:63px;height:17px;background:#d4d4d4"></div><svg class="b" style="left:4px;top:252px;" width="15" height="12" viewBox="0 0 15 12"><path d="M0.5 11.5 V0.5 H14.5 V4.5" fill="none" stroke="#9fb4c8" stroke-width="1"/><path d="M0.5 11.5 H4.5" stroke="#708aa2" stroke-width="1"/><path d="M14.5 1 V4.5" stroke="#708aa2" stroke-width="1"/><path d="M3 2.5 H11 M3 4.5 H11 M3 6.5 H10 M3 8.5 H5" stroke="#b9c9d8" stroke-width="0.8"/><path d="M6.9 8.3 L8.9 10.7 L13.8 6.3" fill="none" stroke="#3a9a20" stroke-width="2.4" stroke-linejoin="round" stroke-linecap="round"/><path d="M7.2 8.2 L8.9 10.1 L13.4 6.1" fill="none" stroke="#86dc5c" stroke-width="0.9"/></svg><svg class="b" style="left:37px;top:253px;" width="14" height="10" viewBox="0 0 14 10"><rect x="0.5" y="0.5" width="13" height="9" fill="#ececfd" stroke="#2a2af6" stroke-width="1"/><path d="M0.8 0.8 L4.8 5 H9.2 L13.2 0.8 M0.8 9.2 L4.8 5 M9.2 5 L13.2 9.2" fill="none" stroke="#4a4af6" stroke-width="0.85"/><rect x="0" y="0" width="2" height="2" fill="#1010e0"/><rect x="12" y="0" width="2" height="2" fill="#1010e0"/><rect x="0" y="8" width="2" height="2" fill="#1010e0"/><rect x="12" y="8" width="2" height="2" fill="#1010e0"/></svg><div class="t" style="left:65px;top:249.84px;font-size:10.85px;line-height:14px;color:#1e1e1e;transform:scaleY(1.1);transform-origin:0 10.76px;">5205</div><div class="t" style="left:114px;top:249.84px;font-size:10.85px;line-height:14px;color:#1e1e1e;transform:scaleY(1.1);transform-origin:0 10.76px;">10161197</div><div class="t" style="left:174px;top:249.84px;font-size:10.85px;line-height:14px;color:#1e1e1e;transform:scaleY(1.1);transform-origin:0 10.76px;">М</div><div class="b" style="left:183px;top:255px;width:32px;height:8px;background:#c0c0c0"></div><div class="t" style="left:215px;top:249.84px;font-size:10.85px;line-height:14px;color:#1e1e1e;transform:scaleY(1.1);transform-origin:0 10.76px;">за Р. М.  44 года</div><div class="t" style="left:317px;top:249.84px;font-size:10.85px;line-height:14px;color:#1e1e1e;transform:scaleY(1.1);transform-origin:0 10.76px;">9/9</div><div class="t" style="left:381px;top:249.84px;font-size:10.85px;line-height:14px;color:#1e1e1e;transform:scaleY(1.1);transform-origin:0 10.76px;">R...</div><div class="t" style="left:408px;top:249.84px;font-size:10.85px;line-height:14px;color:#1e1e1e;transform:scaleY(1.1);transform-origin:0 10.76px;">18.04.2014</div><div class="b" style="left:0px;top:284px;width:462px;height:1px;background:#e6e6e6"></div><div class="b" style="left:313px;top:266px;width:63px;height:17px;background:#d4d4d4"></div><svg class="b" style="left:4px;top:271px;" width="15" height="12" viewBox="0 0 15 12"><path d="M0.5 11.5 V0.5 H14.5 V4.5" fill="none" stroke="#9fb4c8" stroke-width="1"/><path d="M0.5 11.5 H4.5" stroke="#708aa2" stroke-width="1"/><path d="M14.5 1 V4.5" stroke="#708aa2" stroke-width="1"/><path d="M3 2.5 H11 M3 4.5 H11 M3 6.5 H10 M3 8.5 H5" stroke="#b9c9d8" stroke-width="0.8"/><path d="M6.9 8.3 L8.9 10.7 L13.8 6.3" fill="none" stroke="#3a9a20" stroke-width="2.4" stroke-linejoin="round" stroke-linecap="round"/><path d="M7.2 8.2 L8.9 10.1 L13.4 6.1" fill="none" stroke="#86dc5c" stroke-width="0.9"/></svg><svg class="b" style="left:37px;top:272px;" width="14" height="10" viewBox="0 0 14 10"><rect x="0.5" y="0.5" width="13" height="9" fill="#ececfd" stroke="#2a2af6" stroke-width="1"/><path d="M0.8 0.8 L4.8 5 H9.2 L13.2 0.8 M0.8 9.2 L4.8 5 M9.2 5 L13.2 9.2" fill="none" stroke="#4a4af6" stroke-width="0.85"/><rect x="0" y="0" width="2" height="2" fill="#1010e0"/><rect x="12" y="0" width="2" height="2" fill="#1010e0"/><rect x="0" y="8" width="2" height="2" fill="#1010e0"/><rect x="12" y="8" width="2" height="2" fill="#1010e0"/></svg><div class="t" style="left:65px;top:268.84px;font-size:10.85px;line-height:14px;color:#1e1e1e;transform:scaleY(1.1);transform-origin:0 10.76px;">245</div><div class="t" style="left:114px;top:268.84px;font-size:10.85px;line-height:14px;color:#1e1e1e;transform:scaleY(1.1);transform-origin:0 10.76px;">00018372</div><div class="t" style="left:174px;top:268.84px;font-size:10.85px;line-height:14px;color:#1e1e1e;transform:scaleY(1.1);transform-origin:0 10.76px;">Го</div><div class="b" style="left:183px;top:274px;width:31px;height:8px;background:#c0c0c0"></div><div class="t" style="left:214px;top:268.84px;font-size:10.85px;line-height:14px;color:#1e1e1e;transform:scaleY(1.1);transform-origin:0 10.76px;">за Е. М.  34 года</div><div class="t" style="left:317px;top:268.84px;font-size:10.85px;line-height:14px;color:#1e1e1e;transform:scaleY(1.1);transform-origin:0 10.76px;">9/9</div><div class="t" style="left:381px;top:268.84px;font-size:10.85px;line-height:14px;color:#1e1e1e;transform:scaleY(1.1);transform-origin:0 10.76px;">R...</div><div class="t" style="left:408px;top:268.84px;font-size:10.85px;line-height:14px;color:#1e1e1e;transform:scaleY(1.1);transform-origin:0 10.76px;">18.09.2013</div><div class="b" style="left:0px;top:303px;width:462px;height:1px;background:#e6e6e6"></div><div class="b" style="left:313px;top:285px;width:63px;height:17px;background:#d4d4d4"></div><svg class="b" style="left:4px;top:290px;" width="15" height="12" viewBox="0 0 15 12"><path d="M0.5 11.5 V0.5 H14.5 V4.5" fill="none" stroke="#9fb4c8" stroke-width="1"/><path d="M0.5 11.5 H4.5" stroke="#708aa2" stroke-width="1"/><path d="M14.5 1 V4.5" stroke="#708aa2" stroke-width="1"/><path d="M3 2.5 H11 M3 4.5 H11 M3 6.5 H10 M3 8.5 H5" stroke="#b9c9d8" stroke-width="0.8"/><path d="M6.9 8.3 L8.9 10.7 L13.8 6.3" fill="none" stroke="#3a9a20" stroke-width="2.4" stroke-linejoin="round" stroke-linecap="round"/><path d="M7.2 8.2 L8.9 10.1 L13.4 6.1" fill="none" stroke="#86dc5c" stroke-width="0.9"/></svg><svg class="b" style="left:37px;top:291px;" width="14" height="10" viewBox="0 0 14 10"><rect x="0.5" y="0.5" width="13" height="9" fill="#ececfd" stroke="#2a2af6" stroke-width="1"/><path d="M0.8 0.8 L4.8 5 H9.2 L13.2 0.8 M0.8 9.2 L4.8 5 M9.2 5 L13.2 9.2" fill="none" stroke="#4a4af6" stroke-width="0.85"/><rect x="0" y="0" width="2" height="2" fill="#1010e0"/><rect x="12" y="0" width="2" height="2" fill="#1010e0"/><rect x="0" y="8" width="2" height="2" fill="#1010e0"/><rect x="12" y="8" width="2" height="2" fill="#1010e0"/></svg><div class="t" style="left:65px;top:287.84px;font-size:10.85px;line-height:14px;color:#1e1e1e;transform:scaleY(1.1);transform-origin:0 10.76px;">8011</div><div class="t" style="left:114px;top:287.84px;font-size:10.85px;line-height:14px;color:#1e1e1e;transform:scaleY(1.1);transform-origin:0 10.76px;">1040085</div><div class="t" style="left:174px;top:287.84px;font-size:10.85px;line-height:14px;color:#1e1e1e;transform:scaleY(1.1);transform-origin:0 10.76px;">Ф</div><div class="b" style="left:186px;top:293px;width:28px;height:8px;background:#c0c0c0"></div><div class="t" style="left:214px;top:287.84px;font-size:10.85px;line-height:14px;color:#1e1e1e;transform:scaleY(1.1);transform-origin:0 10.76px;">ц К. В.  14 лет</div><div class="t" style="left:317px;top:287.84px;font-size:10.85px;line-height:14px;color:#1e1e1e;transform:scaleY(1.1);transform-origin:0 10.76px;">9/9</div><div class="t" style="left:381px;top:287.84px;font-size:10.85px;line-height:14px;color:#1e1e1e;transform:scaleY(1.1);transform-origin:0 10.76px;">R...</div><div class="t" style="left:408px;top:287.84px;font-size:10.85px;line-height:14px;color:#1e1e1e;transform:scaleY(1.1);transform-origin:0 10.76px;">20.06.2014</div><div class="b" style="left:0px;top:305px;width:462px;height:16px;background:#fcefa3"></div><div class="b" style="left:170px;top:305px;width:142px;height:16px;background:#fad823"></div><div class="b" style="left:31px;top:305px;width:1px;height:16px;background:#fff"></div><div class="b" style="left:60px;top:305px;width:1px;height:16px;background:#fff"></div><div class="b" style="left:109px;top:305px;width:1px;height:16px;background:#fff"></div><div class="b" style="left:169px;top:305px;width:1px;height:16px;background:#fff"></div><div class="b" style="left:312px;top:305px;width:1px;height:16px;background:#fff"></div><div class="b" style="left:376px;top:305px;width:1px;height:16px;background:#fff"></div><div class="b" style="left:403px;top:305px;width:1px;height:16px;background:#fff"></div><div class="b" style="left:0px;top:322px;width:462px;height:1px;background:#e6e6e6"></div><svg class="b" style="left:4px;top:309px;" width="15" height="12" viewBox="0 0 15 12"><path d="M0.5 11.5 V0.5 H14.5 V4.5" fill="none" stroke="#9fb4c8" stroke-width="1"/><path d="M0.5 11.5 H4.5" stroke="#708aa2" stroke-width="1"/><path d="M14.5 1 V4.5" stroke="#708aa2" stroke-width="1"/><path d="M3 2.5 H11 M3 4.5 H11 M3 6.5 H10 M3 8.5 H5" stroke="#b9c9d8" stroke-width="0.8"/><path d="M6.9 8.3 L8.9 10.7 L13.8 6.3" fill="none" stroke="#3a9a20" stroke-width="2.4" stroke-linejoin="round" stroke-linecap="round"/><path d="M7.2 8.2 L8.9 10.1 L13.4 6.1" fill="none" stroke="#86dc5c" stroke-width="0.9"/></svg><svg class="b" style="left:37px;top:310px;" width="14" height="10" viewBox="0 0 14 10"><rect x="0.5" y="0.5" width="13" height="9" fill="#ececfd" stroke="#2a2af6" stroke-width="1"/><path d="M0.8 0.8 L4.8 5 H9.2 L13.2 0.8 M0.8 9.2 L4.8 5 M9.2 5 L13.2 9.2" fill="none" stroke="#4a4af6" stroke-width="0.85"/><rect x="0" y="0" width="2" height="2" fill="#1010e0"/><rect x="12" y="0" width="2" height="2" fill="#1010e0"/><rect x="0" y="8" width="2" height="2" fill="#1010e0"/><rect x="12" y="8" width="2" height="2" fill="#1010e0"/></svg><div class="t" style="left:65px;top:306.84px;font-size:10.85px;line-height:14px;color:#1e1e1e;transform:scaleY(1.1);transform-origin:0 10.76px;">491</div><div class="t" style="left:114px;top:306.84px;font-size:10.85px;line-height:14px;color:#1e1e1e;transform:scaleY(1.1);transform-origin:0 10.76px;">1040980</div><div class="t" style="left:174px;top:306.84px;font-size:10.85px;line-height:14px;color:#1e1e1e;transform:scaleY(1.1);transform-origin:0 10.76px;">Д</div><div class="b" style="left:180px;top:312px;width:29px;height:8px;background:#c0c0c0"></div><div class="t" style="left:209px;top:306.84px;font-size:10.85px;line-height:14px;color:#1e1e1e;transform:scaleY(1.1);transform-origin:0 10.76px;">з В. А.  62 года</div><div class="t" style="left:317px;top:306.84px;font-size:10.85px;line-height:14px;color:#1e1e1e;transform:scaleY(1.1);transform-origin:0 10.76px;">9/9</div><div class="t" style="left:381px;top:306.84px;font-size:10.85px;line-height:14px;color:#1e1e1e;transform:scaleY(1.1);transform-origin:0 10.76px;">R...</div><div class="t" style="left:408px;top:306.84px;font-size:10.85px;line-height:14px;color:#1e1e1e;transform:scaleY(1.1);transform-origin:0 10.76px;">23.06.2014</div><div class="b" style="left:0px;top:341px;width:462px;height:1px;background:#e6e6e6"></div><div class="b" style="left:313px;top:323px;width:63px;height:17px;background:#d4d4d4"></div><svg class="b" style="left:4px;top:328px;" width="15" height="12" viewBox="0 0 15 12"><path d="M0.5 11.5 V0.5 H14.5 V4.5" fill="none" stroke="#9fb4c8" stroke-width="1"/><path d="M0.5 11.5 H4.5" stroke="#708aa2" stroke-width="1"/><path d="M14.5 1 V4.5" stroke="#708aa2" stroke-width="1"/><path d="M3 2.5 H11 M3 4.5 H11 M3 6.5 H10 M3 8.5 H5" stroke="#b9c9d8" stroke-width="0.8"/><path d="M6.9 8.3 L8.9 10.7 L13.8 6.3" fill="none" stroke="#3a9a20" stroke-width="2.4" stroke-linejoin="round" stroke-linecap="round"/><path d="M7.2 8.2 L8.9 10.1 L13.4 6.1" fill="none" stroke="#86dc5c" stroke-width="0.9"/></svg><svg class="b" style="left:37px;top:329px;" width="14" height="10" viewBox="0 0 14 10"><rect x="0.5" y="0.5" width="13" height="9" fill="#ececfd" stroke="#2a2af6" stroke-width="1"/><path d="M0.8 0.8 L4.8 5 H9.2 L13.2 0.8 M0.8 9.2 L4.8 5 M9.2 5 L13.2 9.2" fill="none" stroke="#4a4af6" stroke-width="0.85"/><rect x="0" y="0" width="2" height="2" fill="#1010e0"/><rect x="12" y="0" width="2" height="2" fill="#1010e0"/><rect x="0" y="8" width="2" height="2" fill="#1010e0"/><rect x="12" y="8" width="2" height="2" fill="#1010e0"/></svg><div class="t" style="left:65px;top:325.84px;font-size:10.85px;line-height:14px;color:#1e1e1e;transform:scaleY(1.1);transform-origin:0 10.76px;">823</div><div class="t" style="left:114px;top:325.84px;font-size:10.85px;line-height:14px;color:#1e1e1e;transform:scaleY(1.1);transform-origin:0 10.76px;">10085486</div><div class="t" style="left:174px;top:325.84px;font-size:10.85px;line-height:14px;color:#1e1e1e;transform:scaleY(1.1);transform-origin:0 10.76px;">Ч</div><div class="b" style="left:179px;top:331px;width:33px;height:8px;background:#c0c0c0"></div><div class="t" style="left:212px;top:325.84px;font-size:10.85px;line-height:14px;color:#1e1e1e;transform:scaleY(1.1);transform-origin:0 10.76px;"> В. А.  41 год</div><div class="t" style="left:317px;top:325.84px;font-size:10.85px;line-height:14px;color:#1e1e1e;transform:scaleY(1.1);transform-origin:0 10.76px;">9/9</div><div class="t" style="left:381px;top:325.84px;font-size:10.85px;line-height:14px;color:#1e1e1e;transform:scaleY(1.1);transform-origin:0 10.76px;">R...</div><div class="t" style="left:408px;top:325.84px;font-size:10.85px;line-height:14px;color:#1e1e1e;transform:scaleY(1.1);transform-origin:0 10.76px;">31.01.2014</div><div class="b" style="left:0px;top:360px;width:462px;height:1px;background:#e6e6e6"></div><div class="b" style="left:313px;top:342px;width:63px;height:17px;background:#d4d4d4"></div><svg class="b" style="left:4px;top:347px;" width="15" height="12" viewBox="0 0 15 12"><path d="M0.5 11.5 V0.5 H14.5 V4.5" fill="none" stroke="#9fb4c8" stroke-width="1"/><path d="M0.5 11.5 H4.5" stroke="#708aa2" stroke-width="1"/><path d="M14.5 1 V4.5" stroke="#708aa2" stroke-width="1"/><path d="M3 2.5 H11 M3 4.5 H11 M3 6.5 H10 M3 8.5 H5" stroke="#b9c9d8" stroke-width="0.8"/><path d="M6.9 8.3 L8.9 10.7 L13.8 6.3" fill="none" stroke="#3a9a20" stroke-width="2.4" stroke-linejoin="round" stroke-linecap="round"/><path d="M7.2 8.2 L8.9 10.1 L13.4 6.1" fill="none" stroke="#86dc5c" stroke-width="0.9"/></svg><svg class="b" style="left:37px;top:348px;" width="14" height="10" viewBox="0 0 14 10"><rect x="0.5" y="0.5" width="13" height="9" fill="#ececfd" stroke="#2a2af6" stroke-width="1"/><path d="M0.8 0.8 L4.8 5 H9.2 L13.2 0.8 M0.8 9.2 L4.8 5 M9.2 5 L13.2 9.2" fill="none" stroke="#4a4af6" stroke-width="0.85"/><rect x="0" y="0" width="2" height="2" fill="#1010e0"/><rect x="12" y="0" width="2" height="2" fill="#1010e0"/><rect x="0" y="8" width="2" height="2" fill="#1010e0"/><rect x="12" y="8" width="2" height="2" fill="#1010e0"/></svg><div class="t" style="left:65px;top:344.84px;font-size:10.85px;line-height:14px;color:#1e1e1e;transform:scaleY(1.1);transform-origin:0 10.76px;">7038</div><div class="t" style="left:114px;top:344.84px;font-size:10.85px;line-height:14px;color:#1e1e1e;transform:scaleY(1.1);transform-origin:0 10.76px;">10010907</div><div class="t" style="left:174px;top:344.84px;font-size:10.85px;line-height:14px;color:#1e1e1e;transform:scaleY(1.1);transform-origin:0 10.76px;">З</div><div class="b" style="left:180px;top:350px;width:38px;height:8px;background:#c0c0c0"></div><div class="t" style="left:218px;top:344.84px;font-size:10.85px;line-height:14px;color:#1e1e1e;transform:scaleY(1.1);transform-origin:0 10.76px;">а О. А.  73 года</div><div class="t" style="left:317px;top:344.84px;font-size:10.85px;line-height:14px;color:#1e1e1e;transform:scaleY(1.1);transform-origin:0 10.76px;">9/9</div><div class="t" style="left:381px;top:344.84px;font-size:10.85px;line-height:14px;color:#1e1e1e;transform:scaleY(1.1);transform-origin:0 10.76px;">R...</div><div class="t" style="left:408px;top:344.84px;font-size:10.85px;line-height:14px;color:#1e1e1e;transform:scaleY(1.1);transform-origin:0 10.76px;">16.10.2013</div><div class="b" style="left:0px;top:379px;width:462px;height:1px;background:#e6e6e6"></div><div class="b" style="left:313px;top:361px;width:63px;height:17px;background:#d4d4d4"></div><svg class="b" style="left:4px;top:366px;" width="15" height="12" viewBox="0 0 15 12"><path d="M0.5 11.5 V0.5 H14.5 V4.5" fill="none" stroke="#9fb4c8" stroke-width="1"/><path d="M0.5 11.5 H4.5" stroke="#708aa2" stroke-width="1"/><path d="M14.5 1 V4.5" stroke="#708aa2" stroke-width="1"/><path d="M3 2.5 H11 M3 4.5 H11 M3 6.5 H10 M3 8.5 H5" stroke="#b9c9d8" stroke-width="0.8"/><path d="M6.9 8.3 L8.9 10.7 L13.8 6.3" fill="none" stroke="#3a9a20" stroke-width="2.4" stroke-linejoin="round" stroke-linecap="round"/><path d="M7.2 8.2 L8.9 10.1 L13.4 6.1" fill="none" stroke="#86dc5c" stroke-width="0.9"/></svg><svg class="b" style="left:37px;top:367px;" width="14" height="10" viewBox="0 0 14 10"><rect x="0.5" y="0.5" width="13" height="9" fill="#e8e8fb" stroke="#1010f0" stroke-width="1"/><path d="M0.5 0.5 L13.5 9.5 M13.5 0.5 L0.5 9.5" stroke="#1010f0" stroke-width="0.8"/><circle cx="7" cy="5" r="3.6" fill="#e8e8fb" stroke="#6010e0" stroke-width="1"/><rect x="5" y="3" width="4" height="4" fill="#4010c0"/></svg><div class="t" style="left:65px;top:363.84px;font-size:10.85px;line-height:14px;color:#1e1e1e;transform:scaleY(1.1);transform-origin:0 10.76px;">1</div><div class="t" style="left:114px;top:363.84px;font-size:10.85px;line-height:14px;color:#1e1e1e;transform:scaleY(1.1);transform-origin:0 10.76px;">0000000...</div><div class="t" style="left:174px;top:363.84px;font-size:10.85px;line-height:14px;color:#1e1e1e;transform:scaleY(1.1);transform-origin:0 10.76px;">По</div><div class="b" style="left:186px;top:369px;width:50px;height:8px;background:#c0c0c0"></div><div class="t" style="left:236px;top:363.84px;font-size:10.85px;line-height:14px;color:#1e1e1e;transform:scaleY(1.1);transform-origin:0 10.76px;">а Л. В.  64 г...</div><div class="t" style="left:317px;top:363.84px;font-size:10.85px;line-height:14px;color:#1e1e1e;transform:scaleY(1.1);transform-origin:0 10.76px;">9/9</div><div class="t" style="left:381px;top:363.84px;font-size:10.85px;line-height:14px;color:#1e1e1e;transform:scaleY(1.1);transform-origin:0 10.76px;">R...</div><div class="t" style="left:408px;top:363.84px;font-size:10.85px;line-height:14px;color:#1e1e1e;transform:scaleY(1.1);transform-origin:0 10.76px;">13.05.2013</div><div class="b" style="left:0px;top:398px;width:462px;height:1px;background:#e6e6e6"></div><div class="b" style="left:313px;top:380px;width:63px;height:17px;background:#d4d4d4"></div><svg class="b" style="left:4px;top:385px;" width="15" height="12" viewBox="0 0 15 12"><path d="M0.5 11.5 V0.5 H14.5 V4.5" fill="none" stroke="#9fb4c8" stroke-width="1"/><path d="M0.5 11.5 H4.5" stroke="#708aa2" stroke-width="1"/><path d="M14.5 1 V4.5" stroke="#708aa2" stroke-width="1"/><path d="M3 2.5 H11 M3 4.5 H11 M3 6.5 H10 M3 8.5 H5" stroke="#b9c9d8" stroke-width="0.8"/><path d="M6.9 8.3 L8.9 10.7 L13.8 6.3" fill="none" stroke="#3a9a20" stroke-width="2.4" stroke-linejoin="round" stroke-linecap="round"/><path d="M7.2 8.2 L8.9 10.1 L13.4 6.1" fill="none" stroke="#86dc5c" stroke-width="0.9"/></svg><svg class="b" style="left:37px;top:386px;" width="14" height="10" viewBox="0 0 14 10"><rect x="0.5" y="0.5" width="13" height="9" fill="#ececfd" stroke="#2a2af6" stroke-width="1"/><path d="M0.8 0.8 L4.8 5 H9.2 L13.2 0.8 M0.8 9.2 L4.8 5 M9.2 5 L13.2 9.2" fill="none" stroke="#4a4af6" stroke-width="0.85"/><rect x="0" y="0" width="2" height="2" fill="#1010e0"/><rect x="12" y="0" width="2" height="2" fill="#1010e0"/><rect x="0" y="8" width="2" height="2" fill="#1010e0"/><rect x="12" y="8" width="2" height="2" fill="#1010e0"/></svg><div class="t" style="left:65px;top:382.84px;font-size:10.85px;line-height:14px;color:#1e1e1e;transform:scaleY(1.1);transform-origin:0 10.76px;">822</div><div class="t" style="left:114px;top:382.84px;font-size:10.85px;line-height:14px;color:#1e1e1e;transform:scaleY(1.1);transform-origin:0 10.76px;">10089515</div><div class="t" style="left:174px;top:382.84px;font-size:10.85px;line-height:14px;color:#1e1e1e;transform:scaleY(1.1);transform-origin:0 10.76px;">О</div><div class="b" style="left:184px;top:388px;width:29px;height:8px;background:#c0c0c0"></div><div class="t" style="left:213px;top:382.84px;font-size:10.85px;line-height:14px;color:#1e1e1e;transform:scaleY(1.1);transform-origin:0 10.76px;">н А. Н.  62 года</div><div class="t" style="left:317px;top:382.84px;font-size:10.85px;line-height:14px;color:#1e1e1e;transform:scaleY(1.1);transform-origin:0 10.76px;">9/9</div><div class="t" style="left:381px;top:382.84px;font-size:10.85px;line-height:14px;color:#1e1e1e;transform:scaleY(1.1);transform-origin:0 10.76px;">R...</div><div class="t" style="left:408px;top:382.84px;font-size:10.85px;line-height:14px;color:#1e1e1e;transform:scaleY(1.1);transform-origin:0 10.76px;">05.02.2014</div><div class="b" style="left:0px;top:417px;width:462px;height:1px;background:#e6e6e6"></div><div class="b" style="left:313px;top:399px;width:63px;height:17px;background:#d4d4d4"></div><svg class="b" style="left:4px;top:404px;" width="15" height="12" viewBox="0 0 15 12"><path d="M0.5 11.5 V0.5 H14.5 V4.5" fill="none" stroke="#9fb4c8" stroke-width="1"/><path d="M0.5 11.5 H4.5" stroke="#708aa2" stroke-width="1"/><path d="M14.5 1 V4.5" stroke="#708aa2" stroke-width="1"/><path d="M3 2.5 H11 M3 4.5 H11 M3 6.5 H10 M3 8.5 H5" stroke="#b9c9d8" stroke-width="0.8"/><path d="M6.9 8.3 L8.9 10.7 L13.8 6.3" fill="none" stroke="#3a9a20" stroke-width="2.4" stroke-linejoin="round" stroke-linecap="round"/><path d="M7.2 8.2 L8.9 10.1 L13.4 6.1" fill="none" stroke="#86dc5c" stroke-width="0.9"/></svg><svg class="b" style="left:37px;top:405px;" width="14" height="10" viewBox="0 0 14 10"><rect x="0.5" y="0.5" width="13" height="9" fill="#e8e8fb" stroke="#1010f0" stroke-width="1"/><path d="M0.5 0.5 L13.5 9.5 M13.5 0.5 L0.5 9.5" stroke="#1010f0" stroke-width="0.8"/><circle cx="7" cy="5" r="3.6" fill="#e8e8fb" stroke="#6010e0" stroke-width="1"/><rect x="5" y="3" width="4" height="4" fill="#4010c0"/></svg><div class="t" style="left:65px;top:401.84px;font-size:10.85px;line-height:14px;color:#1e1e1e;transform:scaleY(1.1);transform-origin:0 10.76px;">1</div><div class="t" style="left:114px;top:401.84px;font-size:10.85px;line-height:14px;color:#1e1e1e;transform:scaleY(1.1);transform-origin:0 10.76px;">0000000...</div><div class="t" style="left:174px;top:401.84px;font-size:10.85px;line-height:14px;color:#1e1e1e;transform:scaleY(1.1);transform-origin:0 10.76px;">А</div><div class="b" style="left:180px;top:407px;width:27px;height:8px;background:#c0c0c0"></div><div class="t" style="left:207px;top:401.84px;font-size:10.85px;line-height:14px;color:#1e1e1e;transform:scaleY(1.1);transform-origin:0 10.76px;">н С. Н.  48 лет</div><div class="t" style="left:317px;top:401.84px;font-size:10.85px;line-height:14px;color:#1e1e1e;transform:scaleY(1.1);transform-origin:0 10.76px;">9/9</div><div class="t" style="left:381px;top:401.84px;font-size:10.85px;line-height:14px;color:#1e1e1e;transform:scaleY(1.1);transform-origin:0 10.76px;">R...</div><div class="t" style="left:408px;top:401.84px;font-size:10.85px;line-height:14px;color:#1e1e1e;transform:scaleY(1.1);transform-origin:0 10.76px;">17.05.2013</div><div class="b" style="left:0px;top:436px;width:462px;height:1px;background:#e6e6e6"></div><div class="b" style="left:313px;top:418px;width:63px;height:17px;background:#d4d4d4"></div><svg class="b" style="left:4px;top:423px;" width="15" height="12" viewBox="0 0 15 12"><path d="M0.5 11.5 V0.5 H14.5 V4.5" fill="none" stroke="#9fb4c8" stroke-width="1"/><path d="M0.5 11.5 H4.5" stroke="#708aa2" stroke-width="1"/><path d="M14.5 1 V4.5" stroke="#708aa2" stroke-width="1"/><path d="M3 2.5 H11 M3 4.5 H11 M3 6.5 H10 M3 8.5 H5" stroke="#b9c9d8" stroke-width="0.8"/><path d="M6.9 8.3 L8.9 10.7 L13.8 6.3" fill="none" stroke="#3a9a20" stroke-width="2.4" stroke-linejoin="round" stroke-linecap="round"/><path d="M7.2 8.2 L8.9 10.1 L13.4 6.1" fill="none" stroke="#86dc5c" stroke-width="0.9"/></svg><svg class="b" style="left:37px;top:424px;" width="14" height="10" viewBox="0 0 14 10"><rect x="0.5" y="0.5" width="13" height="9" fill="#ececfd" stroke="#2a2af6" stroke-width="1"/><path d="M0.8 0.8 L4.8 5 H9.2 L13.2 0.8 M0.8 9.2 L4.8 5 M9.2 5 L13.2 9.2" fill="none" stroke="#4a4af6" stroke-width="0.85"/><rect x="0" y="0" width="2" height="2" fill="#1010e0"/><rect x="12" y="0" width="2" height="2" fill="#1010e0"/><rect x="0" y="8" width="2" height="2" fill="#1010e0"/><rect x="12" y="8" width="2" height="2" fill="#1010e0"/></svg><div class="t" style="left:65px;top:420.84px;font-size:10.85px;line-height:14px;color:#1e1e1e;transform:scaleY(1.1);transform-origin:0 10.76px;">825</div><div class="t" style="left:114px;top:420.84px;font-size:10.85px;line-height:14px;color:#1e1e1e;transform:scaleY(1.1);transform-origin:0 10.76px;">10048621</div><div class="t" style="left:174px;top:420.84px;font-size:10.85px;line-height:14px;color:#1e1e1e;transform:scaleY(1.1);transform-origin:0 10.76px;">О</div><div class="b" style="left:182px;top:426px;width:26px;height:8px;background:#c0c0c0"></div><div class="t" style="left:208px;top:420.84px;font-size:10.85px;line-height:14px;color:#1e1e1e;transform:scaleY(1.1);transform-origin:0 10.76px;">н В. Е.  77 лет</div><div class="t" style="left:317px;top:420.84px;font-size:10.85px;line-height:14px;color:#1e1e1e;transform:scaleY(1.1);transform-origin:0 10.76px;">9/9</div><div class="t" style="left:381px;top:420.84px;font-size:10.85px;line-height:14px;color:#1e1e1e;transform:scaleY(1.1);transform-origin:0 10.76px;">R...</div><div class="t" style="left:408px;top:420.84px;font-size:10.85px;line-height:14px;color:#1e1e1e;transform:scaleY(1.1);transform-origin:0 10.76px;">09.12.2013</div><div class="b" style="left:0px;top:455px;width:462px;height:1px;background:#e6e6e6"></div><div class="b" style="left:313px;top:437px;width:63px;height:17px;background:#d4d4d4"></div><svg class="b" style="left:4px;top:442px;" width="15" height="12" viewBox="0 0 15 12"><path d="M0.5 11.5 V0.5 H14.5 V4.5" fill="none" stroke="#9fb4c8" stroke-width="1"/><path d="M0.5 11.5 H4.5" stroke="#708aa2" stroke-width="1"/><path d="M14.5 1 V4.5" stroke="#708aa2" stroke-width="1"/><path d="M3 2.5 H11 M3 4.5 H11 M3 6.5 H10 M3 8.5 H5" stroke="#b9c9d8" stroke-width="0.8"/><path d="M6.9 8.3 L8.9 10.7 L13.8 6.3" fill="none" stroke="#3a9a20" stroke-width="2.4" stroke-linejoin="round" stroke-linecap="round"/><path d="M7.2 8.2 L8.9 10.1 L13.4 6.1" fill="none" stroke="#86dc5c" stroke-width="0.9"/></svg><svg class="b" style="left:37px;top:443px;" width="14" height="10" viewBox="0 0 14 10"><rect x="0.5" y="0.5" width="13" height="9" fill="#ececfd" stroke="#2a2af6" stroke-width="1"/><path d="M0.8 0.8 L4.8 5 H9.2 L13.2 0.8 M0.8 9.2 L4.8 5 M9.2 5 L13.2 9.2" fill="none" stroke="#4a4af6" stroke-width="0.85"/><rect x="0" y="0" width="2" height="2" fill="#1010e0"/><rect x="12" y="0" width="2" height="2" fill="#1010e0"/><rect x="0" y="8" width="2" height="2" fill="#1010e0"/><rect x="12" y="8" width="2" height="2" fill="#1010e0"/></svg><div class="t" style="left:65px;top:439.84px;font-size:10.85px;line-height:14px;color:#1e1e1e;transform:scaleY(1.1);transform-origin:0 10.76px;">4037</div><div class="t" style="left:114px;top:439.84px;font-size:10.85px;line-height:14px;color:#1e1e1e;transform:scaleY(1.1);transform-origin:0 10.76px;">10113908</div><div class="t" style="left:174px;top:439.84px;font-size:10.85px;line-height:14px;color:#1e1e1e;transform:scaleY(1.1);transform-origin:0 10.76px;">С</div><div class="b" style="left:181px;top:445px;width:43px;height:8px;background:#c0c0c0"></div><div class="t" style="left:224px;top:439.84px;font-size:10.85px;line-height:14px;color:#1e1e1e;transform:scaleY(1.1);transform-origin:0 10.76px;">за И. Г.  50 лет</div><div class="t" style="left:317px;top:439.84px;font-size:10.85px;line-height:14px;color:#1e1e1e;transform:scaleY(1.1);transform-origin:0 10.76px;">9/9</div><div class="t" style="left:381px;top:439.84px;font-size:10.85px;line-height:14px;color:#1e1e1e;transform:scaleY(1.1);transform-origin:0 10.76px;">R...</div><div class="t" style="left:408px;top:439.84px;font-size:10.85px;line-height:14px;color:#1e1e1e;transform:scaleY(1.1);transform-origin:0 10.76px;">04.03.2014</div><div class="b" style="left:0px;top:474px;width:462px;height:1px;background:#e6e6e6"></div><div class="b" style="left:313px;top:456px;width:63px;height:17px;background:#d4d4d4"></div><svg class="b" style="left:4px;top:461px;" width="15" height="12" viewBox="0 0 15 12"><path d="M0.5 11.5 V0.5 H14.5 V4.5" fill="none" stroke="#9fb4c8" stroke-width="1"/><path d="M0.5 11.5 H4.5" stroke="#708aa2" stroke-width="1"/><path d="M14.5 1 V4.5" stroke="#708aa2" stroke-width="1"/><path d="M3 2.5 H11 M3 4.5 H11 M3 6.5 H10 M3 8.5 H5" stroke="#b9c9d8" stroke-width="0.8"/><path d="M6.9 8.3 L8.9 10.7 L13.8 6.3" fill="none" stroke="#3a9a20" stroke-width="2.4" stroke-linejoin="round" stroke-linecap="round"/><path d="M7.2 8.2 L8.9 10.1 L13.4 6.1" fill="none" stroke="#86dc5c" stroke-width="0.9"/></svg><svg class="b" style="left:37px;top:462px;" width="14" height="10" viewBox="0 0 14 10"><rect x="0.5" y="0.5" width="13" height="9" fill="#ececfd" stroke="#2a2af6" stroke-width="1"/><path d="M0.8 0.8 L4.8 5 H9.2 L13.2 0.8 M0.8 9.2 L4.8 5 M9.2 5 L13.2 9.2" fill="none" stroke="#4a4af6" stroke-width="0.85"/><rect x="0" y="0" width="2" height="2" fill="#1010e0"/><rect x="12" y="0" width="2" height="2" fill="#1010e0"/><rect x="0" y="8" width="2" height="2" fill="#1010e0"/><rect x="12" y="8" width="2" height="2" fill="#1010e0"/></svg><div class="t" style="left:65px;top:458.84px;font-size:10.85px;line-height:14px;color:#1e1e1e;transform:scaleY(1.1);transform-origin:0 10.76px;">246</div><div class="t" style="left:114px;top:458.84px;font-size:10.85px;line-height:14px;color:#1e1e1e;transform:scaleY(1.1);transform-origin:0 10.76px;">10035747</div><div class="t" style="left:174px;top:458.84px;font-size:10.85px;line-height:14px;color:#1e1e1e;transform:scaleY(1.1);transform-origin:0 10.76px;">Го</div><div class="b" style="left:182px;top:464px;width:37px;height:8px;background:#c0c0c0"></div><div class="t" style="left:219px;top:458.84px;font-size:10.85px;line-height:14px;color:#1e1e1e;transform:scaleY(1.1);transform-origin:0 10.76px;">за Л. Д.  79 лет</div><div class="t" style="left:317px;top:458.84px;font-size:10.85px;line-height:14px;color:#1e1e1e;transform:scaleY(1.1);transform-origin:0 10.76px;">9/9</div><div class="t" style="left:381px;top:458.84px;font-size:10.85px;line-height:14px;color:#1e1e1e;transform:scaleY(1.1);transform-origin:0 10.76px;">R...</div><div class="t" style="left:408px;top:458.84px;font-size:10.85px;line-height:14px;color:#1e1e1e;transform:scaleY(1.1);transform-origin:0 10.76px;">21.11.2013</div><div class="b" style="left:0px;top:493px;width:462px;height:1px;background:#e6e6e6"></div><div class="b" style="left:313px;top:475px;width:63px;height:17px;background:#d4d4d4"></div><svg class="b" style="left:4px;top:480px;" width="15" height="12" viewBox="0 0 15 12"><path d="M0.5 11.5 V0.5 H14.5 V4.5" fill="none" stroke="#9fb4c8" stroke-width="1"/><path d="M0.5 11.5 H4.5" stroke="#708aa2" stroke-width="1"/><path d="M14.5 1 V4.5" stroke="#708aa2" stroke-width="1"/><path d="M3 2.5 H11 M3 4.5 H11 M3 6.5 H10 M3 8.5 H5" stroke="#b9c9d8" stroke-width="0.8"/><path d="M6.9 8.3 L8.9 10.7 L13.8 6.3" fill="none" stroke="#3a9a20" stroke-width="2.4" stroke-linejoin="round" stroke-linecap="round"/><path d="M7.2 8.2 L8.9 10.1 L13.4 6.1" fill="none" stroke="#86dc5c" stroke-width="0.9"/></svg><svg class="b" style="left:37px;top:481px;" width="14" height="10" viewBox="0 0 14 10"><rect x="0.5" y="0.5" width="13" height="9" fill="#ececfd" stroke="#2a2af6" stroke-width="1"/><path d="M0.8 0.8 L4.8 5 H9.2 L13.2 0.8 M0.8 9.2 L4.8 5 M9.2 5 L13.2 9.2" fill="none" stroke="#4a4af6" stroke-width="0.85"/><rect x="0" y="0" width="2" height="2" fill="#1010e0"/><rect x="12" y="0" width="2" height="2" fill="#1010e0"/><rect x="0" y="8" width="2" height="2" fill="#1010e0"/><rect x="12" y="8" width="2" height="2" fill="#1010e0"/></svg><div class="t" style="left:65px;top:477.84px;font-size:10.85px;line-height:14px;color:#1e1e1e;transform:scaleY(1.1);transform-origin:0 10.76px;">448</div><div class="t" style="left:114px;top:477.84px;font-size:10.85px;line-height:14px;color:#1e1e1e;transform:scaleY(1.1);transform-origin:0 10.76px;">10134689</div><div class="t" style="left:174px;top:477.84px;font-size:10.85px;line-height:14px;color:#1e1e1e;transform:scaleY(1.1);transform-origin:0 10.76px;">З</div><div class="b" style="left:181px;top:483px;width:35px;height:8px;background:#c0c0c0"></div><div class="t" style="left:216px;top:477.84px;font-size:10.85px;line-height:14px;color:#1e1e1e;transform:scaleY(1.1);transform-origin:0 10.76px;"> К. А.  23 года</div><div class="t" style="left:317px;top:477.84px;font-size:10.85px;line-height:14px;color:#1e1e1e;transform:scaleY(1.1);transform-origin:0 10.76px;">9/9</div><div class="t" style="left:381px;top:477.84px;font-size:10.85px;line-height:14px;color:#1e1e1e;transform:scaleY(1.1);transform-origin:0 10.76px;">R...</div><div class="t" style="left:408px;top:477.84px;font-size:10.85px;line-height:14px;color:#1e1e1e;transform:scaleY(1.1);transform-origin:0 10.76px;">25.03.2014</div><div class="b" style="left:0px;top:512px;width:462px;height:1px;background:#e6e6e6"></div><div class="b" style="left:313px;top:494px;width:63px;height:17px;background:#d4d4d4"></div><svg class="b" style="left:4px;top:499px;" width="15" height="12" viewBox="0 0 15 12"><path d="M0.5 11.5 V0.5 H14.5 V4.5" fill="none" stroke="#9fb4c8" stroke-width="1"/><path d="M0.5 11.5 H4.5" stroke="#708aa2" stroke-width="1"/><path d="M14.5 1 V4.5" stroke="#708aa2" stroke-width="1"/><path d="M3 2.5 H11 M3 4.5 H11 M3 6.5 H10 M3 8.5 H5" stroke="#b9c9d8" stroke-width="0.8"/><path d="M6.9 8.3 L8.9 10.7 L13.8 6.3" fill="none" stroke="#3a9a20" stroke-width="2.4" stroke-linejoin="round" stroke-linecap="round"/><path d="M7.2 8.2 L8.9 10.1 L13.4 6.1" fill="none" stroke="#86dc5c" stroke-width="0.9"/></svg><svg class="b" style="left:37px;top:500px;" width="14" height="10" viewBox="0 0 14 10"><rect x="0.5" y="0.5" width="13" height="9" fill="#ececfd" stroke="#2a2af6" stroke-width="1"/><path d="M0.8 0.8 L4.8 5 H9.2 L13.2 0.8 M0.8 9.2 L4.8 5 M9.2 5 L13.2 9.2" fill="none" stroke="#4a4af6" stroke-width="0.85"/><rect x="0" y="0" width="2" height="2" fill="#1010e0"/><rect x="12" y="0" width="2" height="2" fill="#1010e0"/><rect x="0" y="8" width="2" height="2" fill="#1010e0"/><rect x="12" y="8" width="2" height="2" fill="#1010e0"/></svg><div class="t" style="left:65px;top:496.84px;font-size:10.85px;line-height:14px;color:#1e1e1e;transform:scaleY(1.1);transform-origin:0 10.76px;">79</div><div class="t" style="left:114px;top:496.84px;font-size:10.85px;line-height:14px;color:#1e1e1e;transform:scaleY(1.1);transform-origin:0 10.76px;">1016676</div><div class="t" style="left:174px;top:496.84px;font-size:10.85px;line-height:14px;color:#1e1e1e;transform:scaleY(1.1);transform-origin:0 10.76px;">Б</div><div class="b" style="left:182px;top:502px;width:20px;height:8px;background:#c0c0c0"></div><div class="t" style="left:202px;top:496.84px;font-size:10.85px;line-height:14px;color:#1e1e1e;transform:scaleY(1.1);transform-origin:0 10.76px;">в В. В.  59 лет</div><div class="t" style="left:317px;top:496.84px;font-size:10.85px;line-height:14px;color:#1e1e1e;transform:scaleY(1.1);transform-origin:0 10.76px;">9/9</div><div class="t" style="left:381px;top:496.84px;font-size:10.85px;line-height:14px;color:#1e1e1e;transform:scaleY(1.1);transform-origin:0 10.76px;">R...</div><div class="t" style="left:408px;top:496.84px;font-size:10.85px;line-height:14px;color:#1e1e1e;transform:scaleY(1.1);transform-origin:0 10.76px;">22.05.2014</div><div class="b" style="left:0px;top:531px;width:462px;height:1px;background:#e6e6e6"></div><div class="b" style="left:313px;top:513px;width:63px;height:17px;background:#d4d4d4"></div><svg class="b" style="left:4px;top:518px;" width="15" height="12" viewBox="0 0 15 12"><path d="M0.5 11.5 V0.5 H14.5 V4.5" fill="none" stroke="#9fb4c8" stroke-width="1"/><path d="M0.5 11.5 H4.5" stroke="#708aa2" stroke-width="1"/><path d="M14.5 1 V4.5" stroke="#708aa2" stroke-width="1"/><path d="M3 2.5 H11 M3 4.5 H11 M3 6.5 H10 M3 8.5 H5" stroke="#b9c9d8" stroke-width="0.8"/><path d="M6.9 8.3 L8.9 10.7 L13.8 6.3" fill="none" stroke="#3a9a20" stroke-width="2.4" stroke-linejoin="round" stroke-linecap="round"/><path d="M7.2 8.2 L8.9 10.1 L13.4 6.1" fill="none" stroke="#86dc5c" stroke-width="0.9"/></svg><svg class="b" style="left:37px;top:519px;" width="14" height="10" viewBox="0 0 14 10"><rect x="0.5" y="0.5" width="13" height="9" fill="#ececfd" stroke="#2a2af6" stroke-width="1"/><path d="M0.8 0.8 L4.8 5 H9.2 L13.2 0.8 M0.8 9.2 L4.8 5 M9.2 5 L13.2 9.2" fill="none" stroke="#4a4af6" stroke-width="0.85"/><rect x="0" y="0" width="2" height="2" fill="#1010e0"/><rect x="12" y="0" width="2" height="2" fill="#1010e0"/><rect x="0" y="8" width="2" height="2" fill="#1010e0"/><rect x="12" y="8" width="2" height="2" fill="#1010e0"/></svg><div class="t" style="left:65px;top:515.84px;font-size:10.85px;line-height:14px;color:#1e1e1e;transform:scaleY(1.1);transform-origin:0 10.76px;">823</div><div class="t" style="left:114px;top:515.84px;font-size:10.85px;line-height:14px;color:#1e1e1e;transform:scaleY(1.1);transform-origin:0 10.76px;">10104261</div><div class="t" style="left:174px;top:515.84px;font-size:10.85px;line-height:14px;color:#1e1e1e;transform:scaleY(1.1);transform-origin:0 10.76px;">Гил</div><div class="b" style="left:191px;top:521px;width:34px;height:8px;background:#c0c0c0"></div><div class="t" style="left:225px;top:515.84px;font-size:10.85px;line-height:14px;color:#1e1e1e;transform:scaleY(1.1);transform-origin:0 10.76px;">ат М. Н.  67 лет</div><div class="t" style="left:317px;top:515.84px;font-size:10.85px;line-height:14px;color:#1e1e1e;transform:scaleY(1.1);transform-origin:0 10.76px;">9/9</div><div class="t" style="left:381px;top:515.84px;font-size:10.85px;line-height:14px;color:#1e1e1e;transform:scaleY(1.1);transform-origin:0 10.76px;">R...</div><div class="t" style="left:408px;top:515.84px;font-size:10.85px;line-height:14px;color:#1e1e1e;transform:scaleY(1.1);transform-origin:0 10.76px;">20.02.2014</div></div><div class="b" style="left:495px;top:512px;width:9px;height:16px;background:#c9c9c9;border-radius:4px"></div><svg class="b" style="left:496px;top:780px;" width="7" height="5" viewBox="0 0 7 5"><path d="M0.5 1 L3.5 4.2 L6.5 1 Z" fill="#e0e0e0"/></svg><div class="b" style="left:49px;top:797px;width:60px;height:9px;background:#c9c9c9;border-radius:4px"></div><svg class="b" style="left:37px;top:798px;" width="5" height="8" viewBox="0 0 5 8"><path d="M4.5 0.5 L0.5 4 L4.5 7.5 Z" fill="#e2e2e2"/></svg><svg class="b" style="left:477px;top:798px;" width="5" height="8" viewBox="0 0 5 8"><path d="M0.5 0.5 L4.5 4 L0.5 7.5 Z" fill="#e2e2e2"/></svg><div class="btn" style="left:516px;top:248px;width:22px;height:22px"></div><svg class="b" style="left:519px;top:251px;" width="16" height="16" viewBox="0 0 16 16"><rect x="0.5" y="0.5" width="15" height="15" rx="1" fill="#b9c8d6" stroke="#a5b5c5"/><rect x="3" y="1" width="10" height="5" fill="#cfdae4"/><rect x="3.5" y="9" width="9" height="6" fill="#d5dee6"/><rect x="5" y="10.5" width="2" height="3.5" fill="#a9b9c9"/></svg><div class="btn" style="left:543px;top:248px;width:22px;height:22px"></div><svg class="b" style="left:547px;top:252px;" width="14" height="14" viewBox="0 0 14 14"><path d="M4.3 2.2 H7.6 Q11.4 2.2 11.4 6.6" fill="none" stroke="#2a7a12" stroke-width="1.5"/><path d="M9 7.2 H13.9 L11.45 10.6 Z" fill="#2a7a12"/><path d="M9.6 11.6 H6.3 Q2.5 11.6 2.5 7.2" fill="none" stroke="#2a7a12" stroke-width="1.5"/><path d="M0.05 7.4 H4.95 L2.5 4 Z" fill="#2a7a12"/></svg><div class="btn" style="left:570px;top:248px;width:22px;height:22px"></div><svg class="b" style="left:574px;top:252px;" width="14" height="14" viewBox="0 0 14 14"><path d="M0.8 7 L7 0.8 V4 H13 V10 H7 V13.2 Z" fill="#40d8c0" stroke="#1a6a50" stroke-width="1"/><path d="M3 7 L7 3 V5 H11" fill="none" stroke="#b0f8e8" stroke-width="1"/></svg><div class="btn" style="left:597px;top:248px;width:22px;height:22px"></div><svg class="b" style="left:601px;top:252px;" width="14" height="14" viewBox="0 0 14 14"><path d="M13.2 7 L7 0.8 V4 H1 V10 H7 V13.2 Z" fill="#3050f0" stroke="#1a2a8a" stroke-width="1"/><path d="M2 5 H7.5 V3" fill="none" stroke="#a0b8ff" stroke-width="1"/></svg><div class="btn" style="left:624px;top:248px;width:22px;height:22px"></div><svg class="b" style="left:628px;top:253px;" width="13" height="13" viewBox="0 0 13 13"><rect x="0" y="0" width="13" height="13" fill="#2e2e2e"/><rect x="1" y="1" width="2" height="2" fill="#30e010"/><rect x="4" y="1" width="2" height="2" fill="#30e010"/><rect x="7" y="1" width="2" height="2" fill="#f4f4f4"/><rect x="10" y="1" width="2" height="2" fill="#f4f4f4"/><rect x="1" y="4" width="2" height="2" fill="#30e010"/><rect x="4" y="4" width="2" height="2" fill="#30e010"/><rect x="7" y="4" width="2" height="2" fill="#f4f4f4"/><rect x="10" y="4" width="2" height="2" fill="#f4f4f4"/><rect x="1" y="7" width="2" height="2" fill="#30e010"/><rect x="4" y="7" width="2" height="2" fill="#30e010"/><rect x="7" y="7" width="2" height="2" fill="#f4f4f4"/><rect x="10" y="7" width="2" height="2" fill="#f4f4f4"/><rect x="1" y="10" width="2" height="2" fill="#30e010"/><rect x="4" y="10" width="2" height="2" fill="#30e010"/><rect x="7" y="10" width="2" height="2" fill="#f4f4f4"/><rect x="10" y="10" width="2" height="2" fill="#f4f4f4"/></svg><div class="btn" style="left:651px;top:248px;width:22px;height:22px"></div><svg class="b" style="left:657px;top:253px;" width="11" height="10" viewBox="0 0 11 10"><path d="M1.6 1.6 L9.4 8.4 M9.4 1.6 L1.6 8.4" stroke="#e81010" stroke-width="1.5"/><circle cx="9.3" cy="8.3" r="1" fill="#c01010"/><circle cx="1.7" cy="1.7" r="0.8" fill="#e81010"/></svg><div class="btn" style="left:678px;top:248px;width:22px;height:22px"></div><svg class="b" style="left:681px;top:251px;" width="16" height="16" viewBox="0 0 16 16"><path d="M1 1 L5 4.5 L1 8 Z" fill="#30b030"/><path d="M5 8.5 L1 12 L5 15.5 Z" fill="#50c040"/><rect x="6.5" y="1.5" width="8" height="13" fill="#f4f0d8" stroke="#8a8a7a" stroke-width="0.9"/><path d="M8 4 H13 M8 6 H13 M8 9 H13 M8 11.5 H13 M10.5 8.5 V14" stroke="#8a8a7a" stroke-width="0.7"/></svg><div class="btn" style="left:705px;top:248px;width:107px;height:22px"></div><div class="t" style="left:705px;top:252.94px;font-size:10.85px;line-height:14px;color:#1e1e1e;transform:scaleY(1.1);transform-origin:0 10.76px;width:107px;text-align:center;">Настройка аналита</div><div class="btn" style="left:817px;top:248px;width:115px;height:22px"></div><div class="t" style="left:817px;top:252.94px;font-size:10.85px;line-height:14px;color:#1e1e1e;transform:scaleY(1.1);transform-origin:0 10.76px;width:115px;text-align:center;">Настройка методики</div><div class="btn" style="left:1078px;top:248px;width:38px;height:22px"></div><div class="t" style="left:1082px;top:252.94px;font-size:10.85px;line-height:14px;color:#1e1e1e;transform:scaleY(1.1);transform-origin:0 10.76px;">Еще</div><svg class="b" style="left:1107px;top:258px;" width="6" height="4" viewBox="0 0 6 4"><path d="M0 0 H7 L3.5 4 Z" fill="#333"/></svg><div class="b" style="left:516px;top:279px;width:600px;height:531px;border:1px solid #a0a0a0;background:#fff"></div><div class="b" style="left:518px;top:281px;width:20px;height:18px;background:#f1f1f1"></div><div class="b" style="left:539px;top:280px;width:1px;height:20px;background:#cacaca"></div><div class="b" style="left:541px;top:281px;width:23px;height:18px;background:#f1f1f1"></div><div class="b" style="left:565px;top:280px;width:1px;height:20px;background:#cacaca"></div><div class="b" style="left:567px;top:281px;width:100px;height:18px;background:#f1f1f1"></div><div class="b" style="left:668px;top:280px;width:1px;height:20px;background:#cacaca"></div><div class="b" style="left:670px;top:281px;width:60px;height:18px;background:#f1f1f1"></div><div class="b" style="left:731px;top:280px;width:1px;height:20px;background:#cacaca"></div><div class="b" style="left:733px;top:281px;width:39px;height:18px;background:#f1f1f1"></div><div class="b" style="left:773px;top:280px;width:1px;height:20px;background:#cacaca"></div><div class="b" style="left:775px;top:281px;width:218px;height:18px;background:#f1f1f1"></div><div class="b" style="left:994px;top:280px;width:1px;height:20px;background:#cacaca"></div><div class="b" style="left:996px;top:281px;width:65px;height:18px;background:#f1f1f1"></div><div class="b" style="left:1062px;top:280px;width:1px;height:20px;background:#cacaca"></div><div class="b" style="left:1064px;top:281px;width:51px;height:18px;background:#f1f1f1"></div><div class="b" style="left:517px;top:300px;width:598px;height:1px;background:#cacaca"></div><div class="t" style="left:570px;top:283.24px;font-size:10.85px;line-height:14px;color:#333;transform:scaleY(1.1);transform-origin:0 10.76px;">Аналит</div><div class="t" style="left:673.5px;top:283.24px;font-size:10.85px;line-height:14px;color:#333;transform:scaleY(1.1);transform-origin:0 10.76px;">Результат</div><div class="t" style="left:736px;top:283.24px;font-size:10.85px;line-height:14px;color:#333;transform:scaleY(1.1);transform-origin:0 10.76px;">Резу...</div><div class="t" style="left:778.5px;top:283.24px;font-size:10.85px;line-height:14px;color:#333;transform:scaleY(1.1);transform-origin:0 10.76px;">Методика</div><div class="t" style="left:999.5px;top:283.24px;font-size:10.85px;line-height:14px;color:#333;transform:scaleY(1.1);transform-origin:0 10.76px;">Норма</div><div class="t" style="left:1066.5px;top:283.24px;font-size:10.85px;line-height:14px;color:#333;transform:scaleY(1.1);transform-origin:0 10.76px;">Сдвиг</div><div class="b" style="left:669px;top:301px;width:63px;height:17px;background:#fafa8c"></div><div class="b" style="left:517px;top:319px;width:598px;height:1px;background:#e6e6e6"></div><div class="t" style="left:521px;top:304.24px;font-size:10.85px;line-height:14px;color:#1e1e1e;transform:scaleY(1.1);transform-origin:0 10.76px;">=</div><svg class="b" style="left:547px;top:307px;" width="12" height="10" viewBox="0 0 12 10"><ellipse cx="2" cy="3.6" rx="1.5" ry="2.1" fill="none" stroke="#000" stroke-width="1"/><path d="M5.5 0.3 V6 M8.2 1.8 L5.9 3.8 L8.2 6" fill="none" stroke="#000" stroke-width="1"/><path d="M4.2 4.6 L6.5 8.3 L10 4.2" fill="none" stroke="#0a8a0a" stroke-width="1.5"/></svg><div class="t" style="left:570px;top:304.24px;font-size:10.85px;line-height:14px;color:#1e1e1e;transform:scaleY(1.1);transform-origin:0 10.76px;">Глюкоза</div><div class="t" style="left:673.5px;top:304.24px;font-size:10.85px;line-height:14px;color:#1e1e1e;transform:scaleY(1.1);transform-origin:0 10.76px;">11.00</div><div class="t" style="left:778.5px;top:304.24px;font-size:10.85px;line-height:14px;color:#1e1e1e;transform:scaleY(1.1);transform-origin:0 10.76px;">ADVIA 1800, ммоль/л</div><div class="t" style="left:999.5px;top:304.24px;font-size:10.85px;line-height:14px;color:#1e1e1e;transform:scaleY(1.1);transform-origin:0 10.76px;">4,1:5,9</div><div class="t" style="left:1066.5px;top:304.24px;font-size:10.85px;line-height:14px;color:#1e1e1e;transform:scaleY(1.1);transform-origin:0 10.76px;letter-spacing:-0.2px">- ( - - - ) o</div><div class="b" style="left:517px;top:338px;width:598px;height:1px;background:#e6e6e6"></div><div class="t" style="left:521px;top:323.24px;font-size:10.85px;line-height:14px;color:#1e1e1e;transform:scaleY(1.1);transform-origin:0 10.76px;">=</div><svg class="b" style="left:547px;top:326px;" width="12" height="10" viewBox="0 0 12 10"><ellipse cx="2" cy="3.6" rx="1.5" ry="2.1" fill="none" stroke="#000" stroke-width="1"/><path d="M5.5 0.3 V6 M8.2 1.8 L5.9 3.8 L8.2 6" fill="none" stroke="#000" stroke-width="1"/><path d="M4.2 4.6 L6.5 8.3 L10 4.2" fill="none" stroke="#0a8a0a" stroke-width="1.5"/></svg><div class="t" style="left:570px;top:323.24px;font-size:10.85px;line-height:14px;color:#1e1e1e;transform:scaleY(1.1);transform-origin:0 10.76px;">Калий</div><div class="t" style="left:673.5px;top:323.24px;font-size:10.85px;line-height:14px;color:#1e1e1e;transform:scaleY(1.1);transform-origin:0 10.76px;">4.0</div><div class="t" style="left:778.5px;top:323.24px;font-size:10.85px;line-height:14px;color:#1e1e1e;transform:scaleY(1.1);transform-origin:0 10.76px;">ADVIA 1800, ммоль/л</div><div class="t" style="left:999.5px;top:323.24px;font-size:10.85px;line-height:14px;color:#1e1e1e;transform:scaleY(1.1);transform-origin:0 10.76px;">3,5:5,5</div><div class="t" style="left:1066.5px;top:323.24px;font-size:10.85px;line-height:14px;color:#1e1e1e;transform:scaleY(1.1);transform-origin:0 10.76px;letter-spacing:-0.2px">- ( o - - ) -</div><div class="b" style="left:669px;top:339px;width:63px;height:17px;background:#fafa8c"></div><div class="b" style="left:517px;top:357px;width:598px;height:1px;background:#e6e6e6"></div><div class="t" style="left:521px;top:342.24px;font-size:10.85px;line-height:14px;color:#1e1e1e;transform:scaleY(1.1);transform-origin:0 10.76px;">=</div><svg class="b" style="left:547px;top:345px;" width="12" height="10" viewBox="0 0 12 10"><ellipse cx="2" cy="3.6" rx="1.5" ry="2.1" fill="none" stroke="#000" stroke-width="1"/><path d="M5.5 0.3 V6 M8.2 1.8 L5.9 3.8 L8.2 6" fill="none" stroke="#000" stroke-width="1"/><path d="M4.2 4.6 L6.5 8.3 L10 4.2" fill="none" stroke="#0a8a0a" stroke-width="1.5"/></svg><div class="t" style="left:570px;top:342.24px;font-size:10.85px;line-height:14px;color:#1e1e1e;transform:scaleY(1.1);transform-origin:0 10.76px;">АСТ</div><div class="t" style="left:673.5px;top:342.24px;font-size:10.85px;line-height:14px;color:#1e1e1e;transform:scaleY(1.1);transform-origin:0 10.76px;">49</div><div class="t" style="left:778.5px;top:342.24px;font-size:10.85px;line-height:14px;color:#1e1e1e;transform:scaleY(1.1);transform-origin:0 10.76px;">ADVIA 1800, ед/л</div><div class="t" style="left:999.5px;top:342.24px;font-size:10.85px;line-height:14px;color:#1e1e1e;transform:scaleY(1.1);transform-origin:0 10.76px;">0:34</div><div class="t" style="left:1066.5px;top:342.24px;font-size:10.85px;line-height:14px;color:#1e1e1e;transform:scaleY(1.1);transform-origin:0 10.76px;letter-spacing:-0.2px">- ( - - - ) o</div><div class="b" style="left:669px;top:358px;width:63px;height:17px;background:#fafa8c"></div><div class="b" style="left:517px;top:376px;width:598px;height:1px;background:#e6e6e6"></div><div class="t" style="left:521px;top:361.24px;font-size:10.85px;line-height:14px;color:#1e1e1e;transform:scaleY(1.1);transform-origin:0 10.76px;">=</div><svg class="b" style="left:547px;top:364px;" width="12" height="10" viewBox="0 0 12 10"><ellipse cx="2" cy="3.6" rx="1.5" ry="2.1" fill="none" stroke="#000" stroke-width="1"/><path d="M5.5 0.3 V6 M8.2 1.8 L5.9 3.8 L8.2 6" fill="none" stroke="#000" stroke-width="1"/><path d="M4.2 4.6 L6.5 8.3 L10 4.2" fill="none" stroke="#0a8a0a" stroke-width="1.5"/></svg><div class="t" style="left:570px;top:361.24px;font-size:10.85px;line-height:14px;color:#1e1e1e;transform:scaleY(1.1);transform-origin:0 10.76px;">АЛТ</div><div class="t" style="left:673.5px;top:361.24px;font-size:10.85px;line-height:14px;color:#1e1e1e;transform:scaleY(1.1);transform-origin:0 10.76px;">159</div><div class="t" style="left:778.5px;top:361.24px;font-size:10.85px;line-height:14px;color:#1e1e1e;transform:scaleY(1.1);transform-origin:0 10.76px;">ADVIA 1800, ед/л</div><div class="t" style="left:999.5px;top:361.24px;font-size:10.85px;line-height:14px;color:#1e1e1e;transform:scaleY(1.1);transform-origin:0 10.76px;">10:49</div><div class="t" style="left:1066.5px;top:361.24px;font-size:10.85px;line-height:14px;color:#1e1e1e;transform:scaleY(1.1);transform-origin:0 10.76px;letter-spacing:-0.2px">- ( - - - ) o</div><div class="b" style="left:517px;top:395px;width:598px;height:1px;background:#e6e6e6"></div><div class="t" style="left:521px;top:380.24px;font-size:10.85px;line-height:14px;color:#1e1e1e;transform:scaleY(1.1);transform-origin:0 10.76px;">=</div><svg class="b" style="left:547px;top:383px;" width="12" height="10" viewBox="0 0 12 10"><ellipse cx="2" cy="3.6" rx="1.5" ry="2.1" fill="none" stroke="#000" stroke-width="1"/><path d="M5.5 0.3 V6 M8.2 1.8 L5.9 3.8 L8.2 6" fill="none" stroke="#000" stroke-width="1"/><path d="M4.2 4.6 L6.5 8.3 L10 4.2" fill="none" stroke="#0a8a0a" stroke-width="1.5"/></svg><div class="t" style="left:570px;top:380.24px;font-size:10.85px;line-height:14px;color:#1e1e1e;transform:scaleY(1.1);transform-origin:0 10.76px;">Щелочная фосф...</div><div class="t" style="left:673.5px;top:380.24px;font-size:10.85px;line-height:14px;color:#1e1e1e;transform:scaleY(1.1);transform-origin:0 10.76px;">161.00</div><div class="t" style="left:778.5px;top:380.24px;font-size:10.85px;line-height:14px;color:#1e1e1e;transform:scaleY(1.1);transform-origin:0 10.76px;">ADVIA 1800, ед/л</div><div class="t" style="left:999.5px;top:380.24px;font-size:10.85px;line-height:14px;color:#1e1e1e;transform:scaleY(1.1);transform-origin:0 10.76px;">70:360</div><div class="t" style="left:1066.5px;top:380.24px;font-size:10.85px;line-height:14px;color:#1e1e1e;transform:scaleY(1.1);transform-origin:0 10.76px;letter-spacing:-0.2px">- ( o - - ) -</div><div class="b" style="left:669px;top:396px;width:63px;height:17px;background:#fafa8c"></div><div class="b" style="left:517px;top:414px;width:598px;height:1px;background:#e6e6e6"></div><div class="t" style="left:521px;top:399.24px;font-size:10.85px;line-height:14px;color:#1e1e1e;transform:scaleY(1.1);transform-origin:0 10.76px;">=</div><svg class="b" style="left:547px;top:402px;" width="12" height="10" viewBox="0 0 12 10"><ellipse cx="2" cy="3.6" rx="1.5" ry="2.1" fill="none" stroke="#000" stroke-width="1"/><path d="M5.5 0.3 V6 M8.2 1.8 L5.9 3.8 L8.2 6" fill="none" stroke="#000" stroke-width="1"/><path d="M4.2 4.6 L6.5 8.3 L10 4.2" fill="none" stroke="#0a8a0a" stroke-width="1.5"/></svg><div class="t" style="left:570px;top:399.24px;font-size:10.85px;line-height:14px;color:#1e1e1e;transform:scaleY(1.1);transform-origin:0 10.76px;">ГГТ</div><div class="t" style="left:673.5px;top:399.24px;font-size:10.85px;line-height:14px;color:#1e1e1e;transform:scaleY(1.1);transform-origin:0 10.76px;">185</div><div class="t" style="left:778.5px;top:399.24px;font-size:10.85px;line-height:14px;color:#1e1e1e;transform:scaleY(1.1);transform-origin:0 10.76px;">ADVIA 1800, ед/л</div><div class="t" style="left:999.5px;top:399.24px;font-size:10.85px;line-height:14px;color:#1e1e1e;transform:scaleY(1.1);transform-origin:0 10.76px;">0:73</div><div class="t" style="left:1066.5px;top:399.24px;font-size:10.85px;line-height:14px;color:#1e1e1e;transform:scaleY(1.1);transform-origin:0 10.76px;letter-spacing:-0.2px">- ( - - - ) o</div><div class="b" style="left:517px;top:433px;width:598px;height:1px;background:#e6e6e6"></div><div class="t" style="left:521px;top:418.24px;font-size:10.85px;line-height:14px;color:#1e1e1e;transform:scaleY(1.1);transform-origin:0 10.76px;">=</div><svg class="b" style="left:547px;top:421px;" width="12" height="10" viewBox="0 0 12 10"><ellipse cx="2" cy="3.6" rx="1.5" ry="2.1" fill="none" stroke="#000" stroke-width="1"/><path d="M5.5 0.3 V6 M8.2 1.8 L5.9 3.8 L8.2 6" fill="none" stroke="#000" stroke-width="1"/><path d="M4.2 4.6 L6.5 8.3 L10 4.2" fill="none" stroke="#0a8a0a" stroke-width="1.5"/></svg><div class="t" style="left:570px;top:418.24px;font-size:10.85px;line-height:14px;color:#1e1e1e;transform:scaleY(1.1);transform-origin:0 10.76px;">IG A</div><div class="t" style="left:673.5px;top:418.24px;font-size:10.85px;line-height:14px;color:#1e1e1e;transform:scaleY(1.1);transform-origin:0 10.76px;">3.35</div><div class="t" style="left:778.5px;top:418.24px;font-size:10.85px;line-height:14px;color:#1e1e1e;transform:scaleY(1.1);transform-origin:0 10.76px;">Synchron, г/л</div><div class="t" style="left:999.5px;top:418.24px;font-size:10.85px;line-height:14px;color:#1e1e1e;transform:scaleY(1.1);transform-origin:0 10.76px;">0,7:4,0</div><div class="t" style="left:1066.5px;top:418.24px;font-size:10.85px;line-height:14px;color:#1e1e1e;transform:scaleY(1.1);transform-origin:0 10.76px;letter-spacing:-0.2px">- ( - - o ) -</div><div class="b" style="left:517px;top:452px;width:598px;height:1px;background:#e6e6e6"></div><div class="t" style="left:521px;top:437.24px;font-size:10.85px;line-height:14px;color:#1e1e1e;transform:scaleY(1.1);transform-origin:0 10.76px;">=</div><svg class="b" style="left:547px;top:440px;" width="12" height="10" viewBox="0 0 12 10"><ellipse cx="2" cy="3.6" rx="1.5" ry="2.1" fill="none" stroke="#000" stroke-width="1"/><path d="M5.5 0.3 V6 M8.2 1.8 L5.9 3.8 L8.2 6" fill="none" stroke="#000" stroke-width="1"/><path d="M4.2 4.6 L6.5 8.3 L10 4.2" fill="none" stroke="#0a8a0a" stroke-width="1.5"/></svg><div class="t" style="left:570px;top:437.24px;font-size:10.85px;line-height:14px;color:#1e1e1e;transform:scaleY(1.1);transform-origin:0 10.76px;">IG M</div><div class="t" style="left:673.5px;top:437.24px;font-size:10.85px;line-height:14px;color:#1e1e1e;transform:scaleY(1.1);transform-origin:0 10.76px;">1.50</div><div class="t" style="left:778.5px;top:437.24px;font-size:10.85px;line-height:14px;color:#1e1e1e;transform:scaleY(1.1);transform-origin:0 10.76px;">Synchron, г/л</div><div class="t" style="left:999.5px;top:437.24px;font-size:10.85px;line-height:14px;color:#1e1e1e;transform:scaleY(1.1);transform-origin:0 10.76px;">0,4:2,3</div><div class="t" style="left:1066.5px;top:437.24px;font-size:10.85px;line-height:14px;color:#1e1e1e;transform:scaleY(1.1);transform-origin:0 10.76px;letter-spacing:-0.2px">- ( - o - ) -</div><div class="b" style="left:669px;top:453px;width:63px;height:17px;background:#fafa8c"></div><div class="b" style="left:517px;top:471px;width:598px;height:1px;background:#e6e6e6"></div><div class="t" style="left:521px;top:456.24px;font-size:10.85px;line-height:14px;color:#1e1e1e;transform:scaleY(1.1);transform-origin:0 10.76px;">=</div><svg class="b" style="left:547px;top:459px;" width="12" height="10" viewBox="0 0 12 10"><ellipse cx="2" cy="3.6" rx="1.5" ry="2.1" fill="none" stroke="#000" stroke-width="1"/><path d="M5.5 0.3 V6 M8.2 1.8 L5.9 3.8 L8.2 6" fill="none" stroke="#000" stroke-width="1"/><path d="M4.2 4.6 L6.5 8.3 L10 4.2" fill="none" stroke="#0a8a0a" stroke-width="1.5"/></svg><div class="t" style="left:570px;top:456.24px;font-size:10.85px;line-height:14px;color:#1e1e1e;transform:scaleY(1.1);transform-origin:0 10.76px;">IG G</div><div class="t" style="left:673.5px;top:456.24px;font-size:10.85px;line-height:14px;color:#1e1e1e;transform:scaleY(1.1);transform-origin:0 10.76px;">6.67</div><div class="t" style="left:778.5px;top:456.24px;font-size:10.85px;line-height:14px;color:#1e1e1e;transform:scaleY(1.1);transform-origin:0 10.76px;">Synchron, г/л</div><div class="t" style="left:999.5px;top:456.24px;font-size:10.85px;line-height:14px;color:#1e1e1e;transform:scaleY(1.1);transform-origin:0 10.76px;">7:16</div><div class="t" style="left:1066.5px;top:456.24px;font-size:10.85px;line-height:14px;color:#1e1e1e;transform:scaleY(1.1);transform-origin:0 10.76px;letter-spacing:-0.2px">o ( - - - ) -</div><div class="b" style="left:537px;top:797px;width:178px;height:9px;background:#c9c9c9;border-radius:4px"></div><svg class="b" style="left:525px;top:798px;" width="5" height="8" viewBox="0 0 5 8"><path d="M4.5 0.5 L0.5 4 L4.5 7.5 Z" fill="#e2e2e2"/></svg><svg class="b" style="left:1101px;top:798px;" width="5" height="8" viewBox="0 0 5 8"><path d="M0.5 0.5 L4.5 4 L0.5 7.5 Z" fill="#e2e2e2"/></svg><div class="b" style="left:1124px;top:264px;width:360px;height:162px;border:1px solid #b4b4b4;background:#fff"></div><div class="b" style="left:1213px;top:246px;width:86px;height:19px;border:1px solid #b4b4b4;border-bottom:none;border-radius:4px 4px 0 0;background:#ececec"></div><div class="t" style="left:1225.5px;top:249.04px;font-size:10.85px;line-height:14px;color:#1e1e1e;transform:scaleY(1.1);transform-origin:0 10.76px;">Заключение</div><div class="b" style="left:1124px;top:246px;width:90px;height:20px;border:1px solid #b4b4b4;border-bottom:none;border-radius:4px 4px 0 0;background:#fff"></div><div class="t" style="left:1136px;top:249.04px;font-size:10.85px;line-height:14px;color:#1e1e1e;transform:scaleY(1.1);transform-origin:0 10.76px;">Информация</div><div class="b" style="left:1125px;top:264px;width:88px;height:2px;background:#fff"></div><div class="b" style="left:1132px;top:272px;width:344px;height:153px;border:1px solid #a0a0a0;background:#fff"></div><div class="b" style="left:1134px;top:274px;width:29px;height:18px;background:#f1f1f1"></div><div class="b" style="left:1164px;top:273px;width:1px;height:20px;background:#cacaca"></div><div class="b" style="left:1166px;top:274px;width:165px;height:18px;background:#f1f1f1"></div><div class="b" style="left:1332px;top:273px;width:1px;height:20px;background:#cacaca"></div><div class="b" style="left:1334px;top:274px;width:141px;height:18px;background:#f1f1f1"></div><div class="b" style="left:1133px;top:293px;width:342px;height:1px;background:#cacaca"></div><div class="t" style="left:1137.5px;top:276.24px;font-size:10.85px;line-height:14px;color:#333;transform:scaleY(1.1);transform-origin:0 10.76px;">№</div><div class="t" style="left:1169.5px;top:276.24px;font-size:10.85px;line-height:14px;color:#333;transform:scaleY(1.1);transform-origin:0 10.76px;">Наименование</div><div class="t" style="left:1337px;top:276.24px;font-size:10.85px;line-height:14px;color:#333;transform:scaleY(1.1);transform-origin:0 10.76px;">Значение</div><div class="b" style="left:1124px;top:451px;width:360px;height:359px;border:1px solid #b4b4b4;background:#fff"></div><div class="b" style="left:1205px;top:433px;width:70px;height:19px;border:1px solid #b4b4b4;border-bottom:none;border-radius:4px 4px 0 0;background:#ececec"></div><div class="t" style="left:1217.5px;top:436.44px;font-size:10.85px;line-height:14px;color:#1e1e1e;transform:scaleY(1.1);transform-origin:0 10.76px;">Профили</div><div class="b" style="left:1274px;top:433px;width:129px;height:19px;border:1px solid #b4b4b4;border-bottom:none;border-radius:4px 4px 0 0;background:#ececec"></div><div class="t" style="left:1287px;top:436.44px;font-size:10.85px;line-height:14px;color:#1e1e1e;transform:scaleY(1.1);transform-origin:0 10.76px;">Заявки анализатора</div><div class="b" style="left:1402px;top:433px;width:66px;height:19px;border:1px solid #b4b4b4;border-bottom:none;border-radius:4px 4px 0 0;background:#ececec"></div><div class="t" style="left:1413.5px;top:436.44px;font-size:10.85px;line-height:14px;color:#1e1e1e;transform:scaleY(1.1);transform-origin:0 10.76px;">Статусы</div><div class="b" style="left:1124px;top:433px;width:82px;height:20px;border:1px solid #b4b4b4;border-bottom:none;border-radius:4px 4px 0 0;background:#fff"></div><div class="t" style="left:1136px;top:436.44px;font-size:10.85px;line-height:14px;color:#1e1e1e;transform:scaleY(1.1);transform-origin:0 10.76px;">Измерения</div><div class="b" style="left:1125px;top:451px;width:80px;height:2px;background:#fff"></div><div class="cb" style="left:1197px;top:460px"></div><div class="t" style="left:1224.5px;top:460.24px;font-size:10.85px;line-height:14px;color:#4a4a4a;transform:scaleY(1.1);transform-origin:0 10.76px;">Анализатор</div><div class="cb" style="left:1365px;top:460px"></div><div class="t" style="left:1393px;top:460.24px;font-size:10.85px;line-height:14px;color:#4a4a4a;transform:scaleY(1.1);transform-origin:0 10.76px;">Дата:</div><div class="btn" style="left:1132px;top:482px;width:24px;height:21px;"></div><svg class="b" style="left:1136px;top:485px;" width="16" height="16" viewBox="0 0 16 16"><defs><radialGradient id="rg3" cx="0.4" cy="0.35" r="0.7"><stop offset="0" stop-color="#ffffff"/><stop offset="1" stop-color="#c8c8c8"/></radialGradient></defs><circle cx="8" cy="8" r="7.3" fill="url(#rg3)" stroke="#9a9a9a" stroke-width="0.9"/><path d="M5.5 5.5 L10.5 10.5 M10.5 5.5 L5.5 10.5" stroke="#e02020" stroke-width="1.8"/></svg><div class="btn" style="left:1164px;top:482px;width:24px;height:21px;"></div><svg class="b" style="left:1169px;top:486px;" width="14" height="14" viewBox="0 0 14 14"><path d="M4.3 2.2 H7.6 Q11.4 2.2 11.4 6.6" fill="none" stroke="#2a7a12" stroke-width="1.5"/><path d="M9 7.2 H13.9 L11.45 10.6 Z" fill="#2a7a12"/><path d="M9.6 11.6 H6.3 Q2.5 11.6 2.5 7.2" fill="none" stroke="#2a7a12" stroke-width="1.5"/><path d="M0.05 7.4 H4.95 L2.5 4 Z" fill="#2a7a12"/></svg><div class="inp" style="left:1196px;top:483px;width:160px;height:20px"></div><div class="vl" style="left:1313px;top:484px;height:18px"></div><div class="vl" style="left:1334px;top:484px;height:18px"></div><div class="t" style="left:1199px;top:486.44px;font-size:10.85px;line-height:14px;color:#1e1e1e;transform:scaleY(1.1);transform-origin:0 10.76px;">SynchronCX5-307</div><div class="t" style="left:1319px;top:487.24px;font-size:10.85px;line-height:14px;color:#333;transform:scaleY(1.1);transform-origin:0 10.76px;">...</div><svg class="b" style="left:1341px;top:489px;" width="10" height="10" viewBox="0 0 10 10"><rect x="3.5" y="0.5" width="5" height="5" fill="none" stroke="#333" stroke-width="1"/><path d="M0.5 3.5 V8.5 H5.5 V5.8" fill="none" stroke="#333" stroke-width="1"/></svg><div class="inp" style="left:1364px;top:483px;width:112px;height:20px"></div><div class="vl" style="left:1454px;top:484px;height:18px"></div><div class="t" style="left:1367px;top:486.44px;font-size:10.85px;line-height:14px;color:#1e1e1e;transform:scaleY(1.1);transform-origin:0 10.76px;">22.09.2014</div><svg class="b" style="left:1460px;top:489px;" width="11" height="10" viewBox="0 0 11 10"><rect x="0.6" y="0.6" width="9.8" height="8.8" fill="#fff" stroke="#333" stroke-width="1.2"/><rect x="2" y="2" width="1.1" height="1.1" fill="#444"/><rect x="4" y="2" width="1.1" height="1.1" fill="#444"/><rect x="6" y="2" width="1.1" height="1.1" fill="#444"/><rect x="8" y="2" width="1.1" height="1.1" fill="#444"/><rect x="2" y="4" width="1.1" height="1.1" fill="#444"/><rect x="4" y="4" width="1.1" height="1.1" fill="#444"/><rect x="6" y="4" width="1.1" height="1.1" fill="#444"/><rect x="8" y="4" width="1.1" height="1.1" fill="#444"/><rect x="2" y="6" width="1.1" height="1.1" fill="#444"/><rect x="4" y="6" width="1.1" height="1.1" fill="#444"/></svg><div class="b" style="left:1132px;top:510px;width:344px;height:282px;border:1px solid #a0a0a0;background:#fff"></div><div class="b" style="left:1134px;top:512px;width:113px;height:18px;background:#f1f1f1"></div><div class="b" style="left:1248px;top:511px;width:1px;height:20px;background:#cacaca"></div><div class="b" style="left:1250px;top:512px;width:59px;height:18px;background:#f1f1f1"></div><div class="b" style="left:1310px;top:511px;width:1px;height:20px;background:#cacaca"></div><div class="b" style="left:1312px;top:512px;width:63px;height:18px;background:#f1f1f1"></div><div class="b" style="left:1376px;top:511px;width:1px;height:20px;background:#cacaca"></div><div class="b" style="left:1378px;top:512px;width:82px;height:18px;background:#f1f1f1"></div><div class="b" style="left:1133px;top:531px;width:327px;height:1px;background:#cacaca"></div><div class="t" style="left:1137px;top:514.24px;font-size:10.85px;line-height:14px;color:#333;transform:scaleY(1.1);transform-origin:0 10.76px;">Анализатор</div><div class="t" style="left:1253px;top:514.24px;font-size:10.85px;line-height:14px;color:#333;transform:scaleY(1.1);transform-origin:0 10.76px;letter-spacing:-0.3px">Штрихкод</div><div class="t" style="left:1315px;top:514.24px;font-size:10.85px;line-height:14px;color:#333;transform:scaleY(1.1);transform-origin:0 10.76px;">Код</div><div class="t" style="left:1381.5px;top:514.24px;font-size:10.85px;line-height:14px;color:#333;transform:scaleY(1.1);transform-origin:0 10.76px;">Фамилия</div><svg class="b" style="left:1464px;top:519px;" width="7" height="5" viewBox="0 0 7 5"><path d="M0.5 4 L3.5 0.8 L6.5 4 Z" fill="#e0e0e0"/></svg><svg class="b" style="left:1464px;top:762px;" width="7" height="5" viewBox="0 0 7 5"><path d="M0.5 1 L3.5 4.2 L6.5 1 Z" fill="#e0e0e0"/></svg><div class="b" style="left:1463px;top:635px;width:9px;height:16px;background:#c9c9c9;border-radius:4px"></div><div class="b" style="left:1153px;top:779px;width:139px;height:9px;background:#c9c9c9;border-radius:4px"></div><svg class="b" style="left:1141px;top:780px;" width="5" height="8" viewBox="0 0 5 8"><path d="M4.5 0.5 L0.5 4 L4.5 7.5 Z" fill="#e2e2e2"/></svg><svg class="b" style="left:1445px;top:780px;" width="5" height="8" viewBox="0 0 5 8"><path d="M0.5 0.5 L4.5 4 L0.5 7.5 Z" fill="#e2e2e2"/></svg></body></html>
